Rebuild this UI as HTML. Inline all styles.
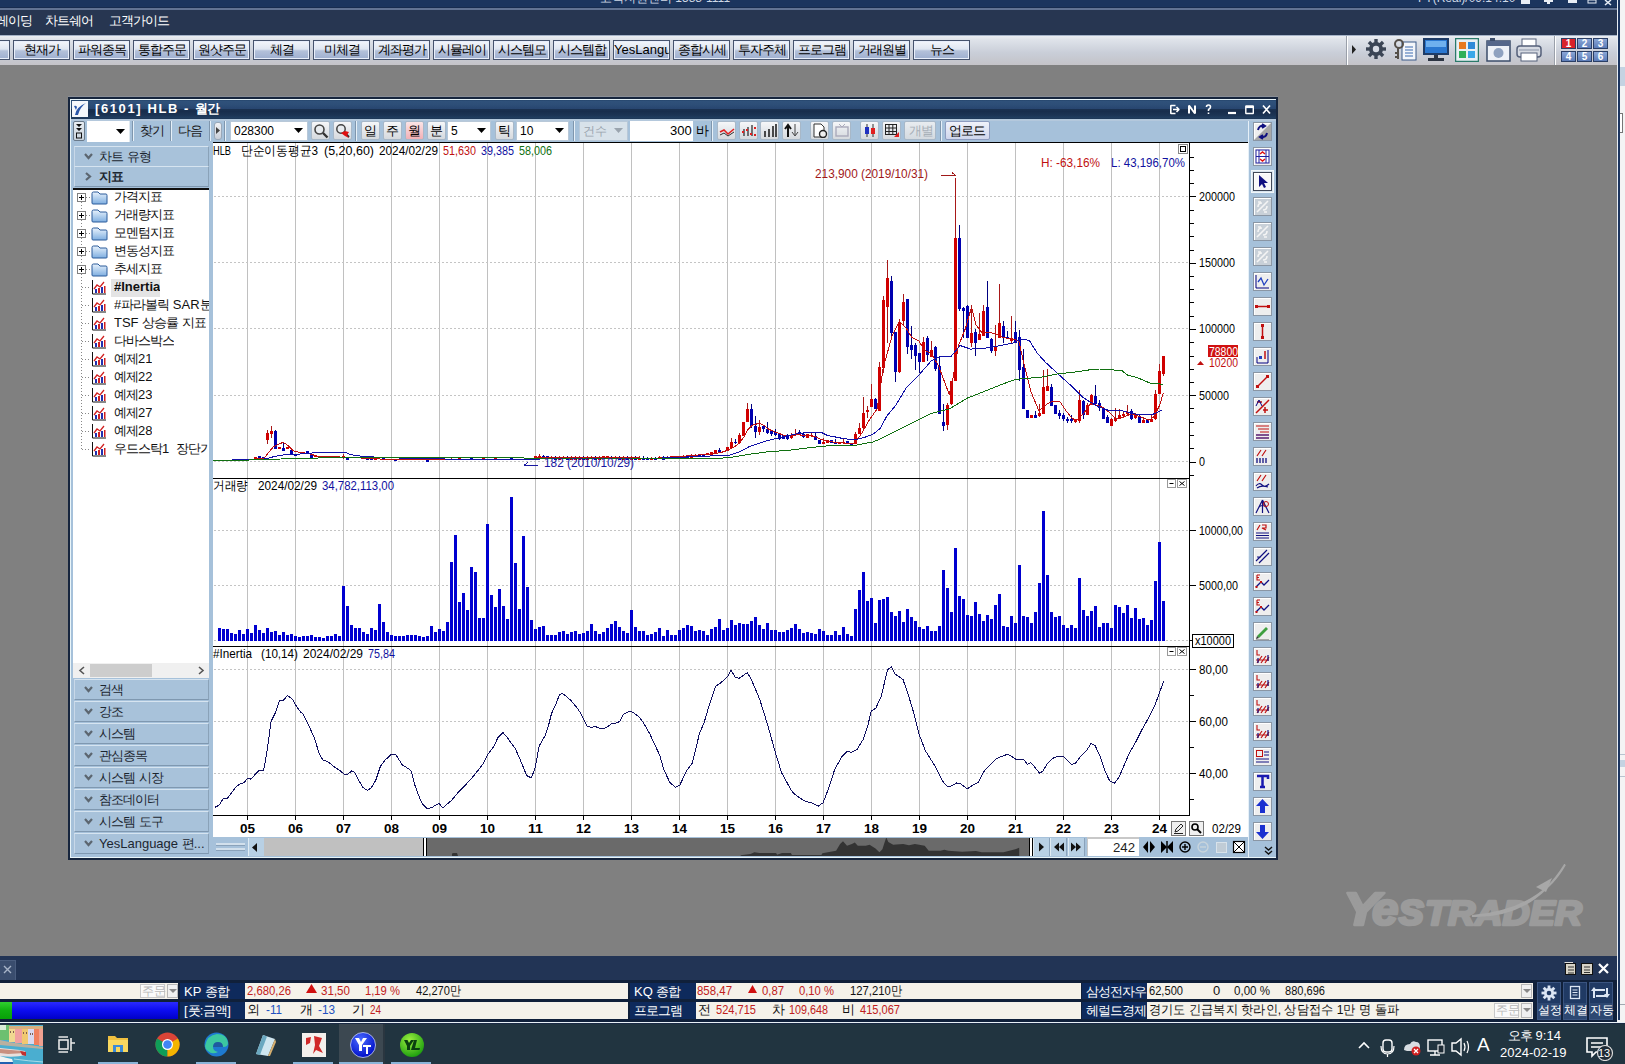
<!DOCTYPE html>
<html><head><meta charset="utf-8">
<style>
*{box-sizing:border-box}
html,body{margin:0;padding:0}
body{width:1625px;height:1064px;overflow:hidden;position:relative;background:#808080;font-family:"Liberation Sans", sans-serif;font-size:12px;color:#000}
.a{position:absolute}
.k{display:inline-block;width:12px;font-weight:inherit;text-align:center;overflow:visible}
.t{position:absolute;white-space:nowrap;line-height:1}
.tbtn{position:absolute;top:40px;height:20px;width:57px;border:1px solid #46536d;background:linear-gradient(#f3f6fb,#dfe6f1 45%,#b4c1da 55%,#9eafcf);box-shadow:inset 0 0 0 1px #e8eefa;text-align:center;font-size:13px;line-height:18px;color:#000;white-space:nowrap;overflow:hidden}
.wbtn{position:absolute;border:1px solid #7d93aa;background:linear-gradient(#eef3f8,#c9d7e6);text-align:center;white-space:nowrap;overflow:hidden}
.lhdr{position:absolute;left:74px;width:135px;height:21px;background:#a9c3dc;border:1px solid #8aa4bf;box-shadow:inset 1px 1px 0 #d8e6f2;font-size:12px;line-height:19px;color:#1a2530;white-space:nowrap}
.ibtn{position:absolute;width:19px;height:19px;border:1px solid #7a8a9c;background:#f0f0f0;box-shadow:inset 1px 1px 0 #fff}
</style></head><body>

<div class="a" style="left:0;top:0;width:1625px;height:8px;background:#1b355e"></div>
<div class="t" style="left:600px;top:-8px;color:#cfd8e6;font-size:12px"><b class="k">고</b><b class="k">객</b><b class="k">지</b><b class="k">원</b><b class="k">센</b><b class="k">터</b> 1588-1111</div>
<div class="t" style="left:1418px;top:-8px;color:#cfd8e6;font-size:12px">FT(Real)/09:14:10</div>
<svg class="a" style="left:1515px;top:0" width="100" height="6" fill="#e8eef6"><rect x="6" y="0" width="9" height="4"/><rect x="29" y="0" width="9" height="2"/><rect x="32" y="2" width="3" height="2"/><rect x="53" y="0" width="9" height="3"/><rect x="73" y="0" width="8" height="3" fill="none" stroke="#e8eef6"/><path d="M90 0L96 5M96 0L90 5" stroke="#e8eef6" stroke-width="1.5"/></svg>
<div class="a" style="left:0;top:7px;width:1625px;height:1px;background:#172c4f"></div>
<div class="a" style="left:0;top:8px;width:1625px;height:2px;background:#617393"></div>
<div class="a" style="left:0;top:10px;width:1625px;height:25px;background:#273651"></div>
<div class="t" style="left:-4px;top:14px;color:#fff;font-size:13px"><b class="k">레</b><b class="k">이</b><b class="k">딩</b></div>
<div class="t" style="left:45px;top:14px;color:#fff;font-size:13px"><b class="k">차</b><b class="k">트</b><b class="k">쉐</b><b class="k">어</b></div>
<div class="t" style="left:109px;top:14px;color:#fff;font-size:13px"><b class="k">고</b><b class="k">객</b><b class="k">가</b><b class="k">이</b><b class="k">드</b></div>
<div class="a" style="left:0;top:35px;width:1617px;height:30px;background:linear-gradient(#eef1f5 0,#dfe3ea 15%,#c9ced8 60%,#c4c3c8 100%)"></div>
<div class="a" style="left:0;top:35px;width:1617px;height:1px;background:#a5b3c8"></div>
<div class="tbtn" style="left:-47px"><b class="k">행</b></div>
<div class="tbtn" style="left:13px"><b class="k">현</b><b class="k">재</b><b class="k">가</b></div>
<div class="tbtn" style="left:73px"><b class="k">파</b><b class="k">워</b><b class="k">종</b><b class="k">목</b></div>
<div class="tbtn" style="left:133px"><b class="k">통</b><b class="k">합</b><b class="k">주</b><b class="k">문</b></div>
<div class="tbtn" style="left:193px"><b class="k">원</b><b class="k">샷</b><b class="k">주</b><b class="k">문</b></div>
<div class="tbtn" style="left:253px"><b class="k">체</b><b class="k">결</b></div>
<div class="tbtn" style="left:313px"><b class="k">미</b><b class="k">체</b><b class="k">결</b></div>
<div class="tbtn" style="left:373px"><b class="k">계</b><b class="k">좌</b><b class="k">평</b><b class="k">가</b></div>
<div class="tbtn" style="left:433px"><b class="k">시</b><b class="k">뮬</b><b class="k">레</b><b class="k">이</b></div>
<div class="tbtn" style="left:493px"><b class="k">시</b><b class="k">스</b><b class="k">템</b><b class="k">모</b></div>
<div class="tbtn" style="left:553px"><b class="k">시</b><b class="k">스</b><b class="k">템</b><b class="k">합</b></div>
<div class="tbtn" style="left:613px">YesLangu</div>
<div class="tbtn" style="left:673px"><b class="k">종</b><b class="k">합</b><b class="k">시</b><b class="k">세</b></div>
<div class="tbtn" style="left:733px"><b class="k">투</b><b class="k">자</b><b class="k">주</b><b class="k">체</b></div>
<div class="tbtn" style="left:793px"><b class="k">프</b><b class="k">로</b><b class="k">그</b><b class="k">램</b></div>
<div class="tbtn" style="left:853px"><b class="k">거</b><b class="k">래</b><b class="k">원</b><b class="k">별</b></div>
<div class="tbtn" style="left:913px"><b class="k">뉴</b><b class="k">스</b></div>
<div class="a" style="left:1346px;top:36px;width:1px;height:29px;background:#9aa0aa"></div>
<div class="a" style="left:1347px;top:36px;width:1px;height:29px;background:#fff"></div>
<svg class="a" style="left:1351px;top:45px" width="6" height="9"><path d="M1 0L5 4.5L1 9Z" fill="#222"/></svg>
<svg class="a" style="left:1365px;top:38px" width="22" height="22" viewBox="0 0 22 22"><g fill="#3b4555"><circle cx="11" cy="11" r="7"/><rect x="9.3" y="1" width="3.4" height="5" transform="rotate(0 11 11)"/><rect x="9.3" y="1" width="3.4" height="5" transform="rotate(45 11 11)"/><rect x="9.3" y="1" width="3.4" height="5" transform="rotate(90 11 11)"/><rect x="9.3" y="1" width="3.4" height="5" transform="rotate(135 11 11)"/><rect x="9.3" y="1" width="3.4" height="5" transform="rotate(180 11 11)"/><rect x="9.3" y="1" width="3.4" height="5" transform="rotate(225 11 11)"/><rect x="9.3" y="1" width="3.4" height="5" transform="rotate(270 11 11)"/><rect x="9.3" y="1" width="3.4" height="5" transform="rotate(315 11 11)"/></g><circle cx="11" cy="11" r="3.2" fill="#d8dce4"/></svg>
<svg class="a" style="left:1392px;top:38px" width="26" height="23"><rect x="10" y="4" width="14" height="18" fill="#f4f6fa" stroke="#3a5a8a"/><g stroke="#3a6ab0"><line x1="13" y1="9" x2="21" y2="9"/><line x1="13" y1="12" x2="21" y2="12"/><line x1="13" y1="15" x2="21" y2="15"/><line x1="13" y1="18" x2="21" y2="18"/></g><circle cx="7" cy="6" r="4" fill="none" stroke="#55504a" stroke-width="2"/><path d="M6 10V21M6 15h-3M6 19h-3" stroke="#55504a" stroke-width="2"/></svg>
<svg class="a" style="left:1423px;top:38px" width="26" height="23"><rect x="1" y="1" width="24" height="15" fill="#2a77d0" stroke="#1e3b66" stroke-width="2"/><rect x="3" y="3" width="20" height="6" fill="#6fb0ee"/><rect x="11" y="17" width="4" height="3" fill="#2c3442"/><rect x="5" y="20" width="16" height="3" fill="#2c3442"/></svg>
<svg class="a" style="left:1455px;top:38px" width="24" height="24"><rect x="0.5" y="0.5" width="23" height="23" fill="#e8f0f4" stroke="#2a7a6a" stroke-width="1.5"/><rect x="4" y="4" width="7" height="7" fill="#e87a20"/><rect x="13" y="4" width="7" height="7" fill="#2e8ad8"/><rect x="4" y="13" width="7" height="7" fill="#2eb05a"/><rect x="13" y="13" width="7" height="7" fill="#3aa8e8"/></svg>
<svg class="a" style="left:1486px;top:38px" width="25" height="24"><rect x="1" y="3" width="23" height="20" fill="#eef2f8" stroke="#3b4c6a" stroke-width="1.5"/><rect x="1" y="3" width="23" height="5" fill="#55678a"/><circle cx="12.5" cy="15" r="5" fill="#8fa2c0"/><rect x="4" y="0" width="5" height="3" fill="#3b4c6a"/></svg>
<svg class="a" style="left:1516px;top:38px" width="26" height="24"><rect x="6" y="1" width="14" height="8" fill="#fff" stroke="#55607a"/><rect x="1" y="8" width="24" height="11" rx="3" fill="#d6dae2" stroke="#55607a" stroke-width="1.5"/><rect x="5" y="15" width="16" height="8" fill="#fff" stroke="#55607a"/><line x1="3" y1="12" x2="23" y2="12" stroke="#8a94a8"/></svg>
<div class="a" style="left:1554px;top:36px;width:1px;height:29px;background:#9aa0aa"></div>
<div class="a" style="left:1555px;top:36px;width:1px;height:29px;background:#fff"></div>
<div class="a" style="left:1561px;top:38px;width:15px;height:11px;background:#d8222a;border:1px solid #2b3f66;color:#fff;font-size:10px;font-weight:bold;line-height:9px;text-align:center">1</div>
<div class="a" style="left:1577px;top:38px;width:15px;height:11px;background:linear-gradient(#8aa6d6,#5c7cb8);border:1px solid #2b3f66;color:#fff;font-size:10px;font-weight:bold;line-height:9px;text-align:center">2</div>
<div class="a" style="left:1593px;top:38px;width:15px;height:11px;background:linear-gradient(#8aa6d6,#5c7cb8);border:1px solid #2b3f66;color:#fff;font-size:10px;font-weight:bold;line-height:9px;text-align:center">3</div>
<div class="a" style="left:1561px;top:51px;width:15px;height:11px;background:linear-gradient(#8aa6d6,#5c7cb8);border:1px solid #2b3f66;color:#fff;font-size:10px;font-weight:bold;line-height:9px;text-align:center">4</div>
<div class="a" style="left:1577px;top:51px;width:15px;height:11px;background:linear-gradient(#8aa6d6,#5c7cb8);border:1px solid #2b3f66;color:#fff;font-size:10px;font-weight:bold;line-height:9px;text-align:center">5</div>
<div class="a" style="left:1593px;top:51px;width:15px;height:11px;background:linear-gradient(#8aa6d6,#5c7cb8);border:1px solid #2b3f66;color:#fff;font-size:10px;font-weight:bold;line-height:9px;text-align:center">6</div>
<div class="a" style="left:1617px;top:0;width:8px;height:1064px;background:#f4f4f4"></div>
<div class="a" style="left:1617px;top:0;width:1px;height:1020px;background:#e8eef4"></div>
<div class="a" style="left:1618px;top:0;width:2px;height:1020px;background:#1c3560"></div>
<div class="a" style="left:1620px;top:67px;width:5px;height:19px;background:#c5d3e2"></div>
<div class="a" style="left:1620px;top:113px;width:3px;height:20px;border:1px solid #777;border-left:0;background:#fff"></div>
<div class="a" style="left:1620px;top:754px;width:5px;height:1px;background:#b8c4d0"></div>
<div class="a" style="left:1620px;top:760px;width:5px;height:7px;background:#c5d3e2"></div>
<div class="a" style="left:1620px;top:776px;width:5px;height:1px;background:#b8c4d0"></div>
<div class="a" style="left:1620px;top:1004px;width:5px;height:1px;background:#a0a8b0"></div>
<svg class="a" style="left:1335px;top:855px" width="260" height="80" viewBox="1335 855 260 80">
<g fill="#9b9b9b" stroke="#9b9b9b" stroke-width="2.6" stroke-linejoin="round" font-family="Liberation Sans" font-weight="bold" font-style="italic">
<text x="1343" y="925" font-size="47" textLength="37" lengthAdjust="spacingAndGlyphs">Y</text>
<text x="1372" y="925" font-size="46" textLength="53" lengthAdjust="spacingAndGlyphs">es</text>
<text x="1425" y="925" font-size="34.5" textLength="157" lengthAdjust="spacingAndGlyphs">TRADER</text>
</g>
<path d="M1472 916 Q1532 918 1565 864.5 Q1540 910 1472 916Z" fill="#a6a6a6" stroke="#a6a6a6" stroke-width="2"/>
<path d="M1536 887 L1552 878 L1546 892Z" fill="#a8a8a8"/>
</svg>
<div class="a" style="left:68px;top:96px;width:1210px;height:1px;background:#8a8e96"></div>
<div class="a" style="left:68px;top:97px;width:1210px;height:763px;background:#16253d"></div>
<div class="a" style="left:70px;top:99px;width:1206px;height:759px;background:#e8f4f8"></div>
<div class="a" style="left:71px;top:100px;width:1205px;height:757px;background:#a6c1da"></div>
<div class="a" style="left:71px;top:100px;width:1205px;height:19px;background:linear-gradient(#24446a 0,#2f517a 6%,#2d4e77 25%,#284670 45%,#1a3150 50%,#182d4c 60%,#1c3454 80%,#213e60 95%,#1d3350 100%)"></div>
<div class="a" style="left:71px;top:119px;width:1205px;height:2px;background:#b4c8dc"></div>
<svg class="a" style="left:72px;top:101px" width="16" height="16"><rect width="16" height="16" fill="#f6f8fb"/><path d="M3 14 Q4 6 14 2 Q8 6 6 14Z" fill="#2a56a8"/><path d="M2 5 Q4 4 5 6 L4 9Z" fill="#2a56a8"/></svg>
<div class="t" style="left:95px;top:102px;color:#fff;font-size:13px;font-weight:bold;letter-spacing:1.6px">[6101] HLB - <b class="k">월</b><b class="k">간</b></div>
<svg class="a" style="left:1168px;top:102px" width="105" height="14" fill="none" stroke="#fff" stroke-width="1.6" stroke-linejoin="bevel">
<path d="M7.5 3.5H2.8V11.5H7.5M5 7.5H10.5M8.5 5L11 7.5L8.5 10"/>
<path d="M21 11.5V3.5L27 11.5V3.5" stroke-width="2"/>
<path d="M38.5 5Q38.5 3 40.5 3Q42.5 3 42.5 5Q42.5 6.5 40.5 7.5V9M40.5 10.5V12" stroke-width="1.6"/>
<path d="M60 11H68" stroke-width="2.2"/>
<rect x="77.8" y="4" width="7.5" height="7.5" stroke-width="1.4"/><path d="M77.8 5H85.3" stroke-width="2"/>
<path d="M95 3.5L102 11.5M102 3.5L95 11.5" stroke-width="1.7"/>
</svg>
<div class="a" style="left:73px;top:121px;width:12px;height:20px;border:1px solid #6a7a8a;border-radius:2px;background:linear-gradient(#e8edf2,#c8d2dc);"></div>
<svg class="a" style="left:75px;top:123px" width="8" height="16"><path d="M1 1H7L4 4Z M1 5H7L4 8Z" fill="#111"/><rect x="1.5" y="10" width="5" height="5" fill="none" stroke="#111"/></svg>
<div class="a" style="left:87px;top:121px;width:43px;height:21px;background:#fff;border-right:1px solid #dfe8ef"></div>
<svg class="a" style="left:116px;top:129px" width="9" height="6"><path d="M0 0H9L4.5 5Z" fill="#000"/></svg>
<div class="a" style="left:132px;top:121px;width:1px;height:20px;background:#7f96ad"></div><div class="a" style="left:133px;top:121px;width:1px;height:20px;background:#e6f0f8"></div>
<div class="t" style="left:140px;top:124px;font-size:13px;color:#1a1a1a"><b class="k">찾</b><b class="k">기</b></div>
<div class="a" style="left:170px;top:121px;width:1px;height:20px;background:#7f96ad"></div><div class="a" style="left:171px;top:121px;width:1px;height:20px;background:#e6f0f8"></div>
<div class="t" style="left:178px;top:124px;font-size:13px;color:#1a1a1a"><b class="k">다</b><b class="k">음</b></div>
<div class="a" style="left:209px;top:121px;width:1px;height:20px;background:#7f96ad"></div><div class="a" style="left:210px;top:121px;width:1px;height:20px;background:#e6f0f8"></div>
<div class="a" style="left:214px;top:122px;width:8px;height:18px;border:1px solid #9aa8b8;border-radius:2px;background:linear-gradient(#f0f2f5,#c8ced8);border-radius:3px"></div>
<svg class="a" style="left:216px;top:127px" width="4" height="7"><path d="M0 0L4 3.5L0 7Z" fill="#444"/></svg>
<div class="a" style="left:224px;top:121px;width:1px;height:20px;background:#7f96ad"></div><div class="a" style="left:225px;top:121px;width:1px;height:20px;background:#e6f0f8"></div>
<div class="a" style="left:230px;top:121px;width:78px;height:20px;background:#fff;border:1px solid #b8c8d8"></div>
<div class="t" style="left:234px;top:125px;font-size:12px;color:#000">028300</div>
<svg class="a" style="left:294px;top:128px" width="9" height="6"><path d="M0 0H9L4.5 5Z" fill="#000"/></svg>
<div class="a" style="left:311px;top:121px;width:19px;height:19px;border:1px solid #a8b8c8;border-radius:2px;background:linear-gradient(#f6f7f9,#e4e7eb 50%,#d6dade);"></div>
<svg class="a" style="left:313px;top:123px" width="16" height="16"><circle cx="6.5" cy="6.5" r="4.5" fill="#e8ecf0" stroke="#444" stroke-width="1.6"/><path d="M10 10L14.5 14.5" stroke="#333" stroke-width="2.4"/></svg>
<div class="a" style="left:333px;top:121px;width:19px;height:19px;border:1px solid #a8b8c8;border-radius:2px;background:linear-gradient(#f6f7f9,#e4e7eb 50%,#d6dade);"></div>
<svg class="a" style="left:335px;top:123px" width="16" height="16"><circle cx="6" cy="6" r="4.2" fill="#e8ecf0" stroke="#444" stroke-width="1.5"/><path d="M9 9L14 14" stroke="#333" stroke-width="2"/><path d="M6 10L10 8L14 9L12 12L14 15L10 13Z" fill="#e01010"/></svg>
<div class="a" style="left:355px;top:121px;width:1px;height:20px;background:#7f96ad"></div><div class="a" style="left:356px;top:121px;width:1px;height:20px;background:#e6f0f8"></div>
<div class="a" style="left:361px;top:121px;width:19px;height:19px;border:1px solid #a8b8c8;border-radius:2px;background:linear-gradient(#f6f7f9,#e4e7eb 50%,#d6dade);"></div>
<div class="t" style="left:364px;top:124px;font-size:13px"><b class="k">일</b></div>
<div class="a" style="left:383px;top:121px;width:19px;height:19px;border:1px solid #a8b8c8;border-radius:2px;background:linear-gradient(#f6f7f9,#e4e7eb 50%,#d6dade);"></div>
<div class="t" style="left:386px;top:124px;font-size:13px"><b class="k">주</b></div>
<div class="a" style="left:405px;top:121px;width:19px;height:19px;border:1px solid #a8b8c8;border-radius:2px;background:linear-gradient(#fbe4e6,#f2b0b6);"></div>
<div class="t" style="left:408px;top:124px;font-size:13px"><b class="k">월</b></div>
<div class="a" style="left:427px;top:121px;width:19px;height:19px;border:1px solid #a8b8c8;border-radius:2px;background:linear-gradient(#f6f7f9,#e4e7eb 50%,#d6dade);"></div>
<div class="t" style="left:430px;top:124px;font-size:13px"><b class="k">분</b></div>
<div class="a" style="left:447px;top:121px;width:44px;height:20px;background:#fff;border:1px solid #b8c8d8"></div>
<div class="t" style="left:451px;top:125px;font-size:12px;color:#000">5</div>
<svg class="a" style="left:477px;top:128px" width="9" height="6"><path d="M0 0H9L4.5 5Z" fill="#000"/></svg>
<div class="a" style="left:495px;top:121px;width:19px;height:19px;border:1px solid #a8b8c8;border-radius:2px;background:linear-gradient(#f6f7f9,#e4e7eb 50%,#d6dade);"></div>
<div class="t" style="left:498px;top:124px;font-size:13px"><b class="k">틱</b></div>
<div class="a" style="left:516px;top:121px;width:53px;height:20px;background:#fff;border:1px solid #b8c8d8"></div>
<div class="t" style="left:520px;top:125px;font-size:12px;color:#000">10</div>
<svg class="a" style="left:555px;top:128px" width="9" height="6"><path d="M0 0H9L4.5 5Z" fill="#000"/></svg>
<div class="a" style="left:573px;top:121px;width:1px;height:20px;background:#7f96ad"></div><div class="a" style="left:574px;top:121px;width:1px;height:20px;background:#e6f0f8"></div>
<div class="a" style="left:579px;top:121px;width:49px;height:20px;background:#d8e2ea;border:1px solid #b8c8d8"></div>
<div class="t" style="left:583px;top:125px;font-size:12px;color:#9aa4ae"><b class="k">건</b><b class="k">수</b></div>
<svg class="a" style="left:614px;top:128px" width="9" height="6"><path d="M0 0H9L4.5 5Z" fill="#9aa4ae"/></svg>
<div class="a" style="left:630px;top:121px;width:63px;height:20px;background:#fff"></div>
<div class="t" style="left:670px;top:124px;font-size:13px">300</div>
<div class="t" style="left:696px;top:124px;font-size:13px"><b class="k">바</b></div>
<div class="a" style="left:711px;top:121px;width:1px;height:20px;background:#7f96ad"></div><div class="a" style="left:712px;top:121px;width:1px;height:20px;background:#e6f0f8"></div>
<div class="a" style="left:717px;top:121px;width:19px;height:19px;border:1px solid #a8b8c8;border-radius:2px;background:linear-gradient(#f6f7f9,#e4e7eb 50%,#d6dade);"></div>
<div class="a" style="left:739px;top:121px;width:19px;height:19px;border:1px solid #a8b8c8;border-radius:2px;background:linear-gradient(#f6f7f9,#e4e7eb 50%,#d6dade);"></div>
<div class="a" style="left:760px;top:121px;width:19px;height:19px;border:1px solid #a8b8c8;border-radius:2px;background:linear-gradient(#f6f7f9,#e4e7eb 50%,#d6dade);"></div>
<div class="a" style="left:782px;top:121px;width:19px;height:19px;border:1px solid #a8b8c8;border-radius:2px;background:linear-gradient(#f6f7f9,#e4e7eb 50%,#d6dade);"></div>
<div class="a" style="left:810px;top:121px;width:19px;height:19px;border:1px solid #a8b8c8;border-radius:2px;background:linear-gradient(#f6f7f9,#e4e7eb 50%,#d6dade);"></div>
<div class="a" style="left:832px;top:121px;width:19px;height:19px;border:1px solid #a8b8c8;border-radius:2px;background:linear-gradient(#f6f7f9,#e4e7eb 50%,#d6dade);"></div>
<div class="a" style="left:860px;top:121px;width:19px;height:19px;border:1px solid #a8b8c8;border-radius:2px;background:linear-gradient(#f6f7f9,#e4e7eb 50%,#d6dade);"></div>
<div class="a" style="left:882px;top:121px;width:19px;height:19px;border:1px solid #a8b8c8;border-radius:2px;background:linear-gradient(#f6f7f9,#e4e7eb 50%,#d6dade);"></div>
<svg class="a" style="left:719px;top:124px" width="16" height="14"><path d="M1 8L5 6L9 10L15 5" stroke="#e02020" stroke-width="1.6" fill="none"/><path d="M1 11L5 9L9 12L15 8" stroke="#303030" stroke-width="1" fill="none"/></svg>
<svg class="a" style="left:741px;top:123px" width="16" height="15"><g stroke="#222" stroke-width="1.2"><path d="M3 6V13M7 4V13M11 2V13"/></g><g fill="#e02020"><rect x="1" y="8" width="2" height="2"/><rect x="5" y="6" width="2" height="2"/><rect x="9" y="10" width="2" height="2"/><rect x="13" y="4" width="2" height="2"/><rect x="13" y="11" width="2" height="2"/></g></svg>
<svg class="a" style="left:762px;top:123px" width="16" height="15"><g stroke="#222" stroke-width="1.6"><path d="M3 8V14M7 6V14M11 3V14M14 1V14"/></g></svg>
<svg class="a" style="left:784px;top:123px" width="16" height="15"><path d="M4 14V3M1 6L4 2L7 6" stroke="#111" stroke-width="2" fill="none"/><path d="M11 1V12M8 9L11 13L14 9" stroke="#444" stroke-width="1" fill="none"/></svg>
<svg class="a" style="left:812px;top:123px" width="16" height="15"><path d="M2 1H9L12 4V14H2Z" fill="#fff" stroke="#333"/><circle cx="11" cy="11" r="3.5" fill="#eee" stroke="#222" stroke-width="1.4"/></svg>
<svg class="a" style="left:834px;top:123px" width="16" height="15"><rect x="2" y="4" width="12" height="9" fill="none" stroke="#aab" stroke-width="1.4"/><path d="M5 1L8 4L11 1" stroke="#aab" fill="none"/></svg>
<svg class="a" style="left:862px;top:123px" width="16" height="15"><path d="M5 1V14M11 1V14" stroke="#333"/><rect x="3" y="4" width="4" height="7" fill="#2030c0"/><rect x="9" y="5" width="4" height="6" fill="#e02020"/></svg>
<svg class="a" style="left:884px;top:123px" width="16" height="15"><g stroke="#222" fill="none"><rect x="1.5" y="1.5" width="11" height="10"/><path d="M1.5 5H12.5M1.5 8.5H12.5M5 1.5V11.5M8.8 1.5V11.5"/></g><path d="M10 14L15 9V14Z" fill="#e02020"/></svg>
<div class="a" style="left:904px;top:121px;width:32px;height:19px;border:1px solid #a8b8c8;border-radius:2px;background:linear-gradient(#e8ecf0,#d4dae0);"></div>
<div class="t" style="left:909px;top:124px;font-size:13px;color:#a8b0b8"><b class="k">개</b><b class="k">별</b></div>
<div class="a" style="left:940px;top:121px;width:1px;height:20px;background:#7f96ad"></div><div class="a" style="left:941px;top:121px;width:1px;height:20px;background:#e6f0f8"></div>
<div class="a" style="left:945px;top:121px;width:45px;height:19px;border:1px solid #8d9cc0;border-radius:2px;background:linear-gradient(#f0f2fa,#cfd6ec);"></div>
<div class="t" style="left:949px;top:124px;font-size:13px"><b class="k">업</b><b class="k">로</b><b class="k">드</b></div>
<div class="a" style="left:71px;top:142px;width:142px;height:715px;background:#a6c1da"></div>
<div class="a" style="left:74px;top:146px;width:135px;height:21px;background:#a8c2da;border-top:1px solid #d6e4f0;border-left:1px solid #c8d8e8;border-bottom:1px solid #7f98b0;border-right:1px solid #8aa2b8"></div>
<svg class="a" style="left:84px;top:153px" width="9" height="8"><path d="M1 1L4.5 5L8 1" stroke="#5c6670" stroke-width="2.2" fill="none"/></svg>
<div class="t" style="left:99px;top:150px;font-size:13px;font-weight:normal;color:#1c2630"><b class="k">차</b><b class="k">트</b> <b class="k">유</b><b class="k">형</b></div>
<div class="a" style="left:74px;top:166px;width:135px;height:21px;background:#a8c2da;border-top:1px solid #d6e4f0;border-left:1px solid #c8d8e8;border-bottom:1px solid #7f98b0;border-right:1px solid #8aa2b8"></div>
<svg class="a" style="left:85px;top:172px" width="8" height="9"><path d="M1 1L5 4.5L1 8" stroke="#5c6670" stroke-width="2.2" fill="none"/></svg>
<div class="t" style="left:99px;top:170px;font-size:13px;font-weight:bold;color:#1c2630"><b class="k">지</b><b class="k">표</b></div>
<div class="a" style="left:73px;top:188px;width:136px;height:2px;background:#101010"></div>
<div class="a" style="left:73px;top:190px;width:136px;height:473px;background:#fff"></div>
<svg class="a" style="left:73px;top:190px" width="136" height="270"><path d="M8.5 12V259" stroke="#888" stroke-dasharray="1,2"/><path d="M13 7.5H18" stroke="#888" stroke-dasharray="1,2"/><path d="M13 25.5H18" stroke="#888" stroke-dasharray="1,2"/><path d="M13 43.5H18" stroke="#888" stroke-dasharray="1,2"/><path d="M13 61.5H18" stroke="#888" stroke-dasharray="1,2"/><path d="M13 79.5H18" stroke="#888" stroke-dasharray="1,2"/><path d="M9 97.5H18" stroke="#888" stroke-dasharray="1,2"/><path d="M9 115.5H18" stroke="#888" stroke-dasharray="1,2"/><path d="M9 133.5H18" stroke="#888" stroke-dasharray="1,2"/><path d="M9 151.5H18" stroke="#888" stroke-dasharray="1,2"/><path d="M9 169.5H18" stroke="#888" stroke-dasharray="1,2"/><path d="M9 187.5H18" stroke="#888" stroke-dasharray="1,2"/><path d="M9 205.5H18" stroke="#888" stroke-dasharray="1,2"/><path d="M9 223.5H18" stroke="#888" stroke-dasharray="1,2"/><path d="M9 241.5H18" stroke="#888" stroke-dasharray="1,2"/><path d="M9 259.5H18" stroke="#888" stroke-dasharray="1,2"/></svg>
<div class="a" style="left:77px;top:193px;width:9px;height:9px;border:1px solid #808080;background:#fff"></div>
<svg class="a" style="left:78px;top:194px" width="7" height="7"><path d="M1 3.5H6M3.5 1V6" stroke="#000"/></svg>
<svg class="a" style="left:91px;top:191px" width="17" height="14"><path d="M1 2.5Q1 1 2.5 1H7L9 3H15Q16 3 16 4.5V12.5Q16 13 15 13H2Q1 13 1 12Z" fill="url(#fg)" stroke="#2a5a9a"/></svg>
<div class="t" style="left:114px;top:190px;font-size:13px;color:#111"><b class="k">가</b><b class="k">격</b><b class="k">지</b><b class="k">표</b></div>
<div class="a" style="left:77px;top:211px;width:9px;height:9px;border:1px solid #808080;background:#fff"></div>
<svg class="a" style="left:78px;top:212px" width="7" height="7"><path d="M1 3.5H6M3.5 1V6" stroke="#000"/></svg>
<svg class="a" style="left:91px;top:209px" width="17" height="14"><path d="M1 2.5Q1 1 2.5 1H7L9 3H15Q16 3 16 4.5V12.5Q16 13 15 13H2Q1 13 1 12Z" fill="url(#fg)" stroke="#2a5a9a"/></svg>
<div class="t" style="left:114px;top:208px;font-size:13px;color:#111"><b class="k">거</b><b class="k">래</b><b class="k">량</b><b class="k">지</b><b class="k">표</b></div>
<div class="a" style="left:77px;top:229px;width:9px;height:9px;border:1px solid #808080;background:#fff"></div>
<svg class="a" style="left:78px;top:230px" width="7" height="7"><path d="M1 3.5H6M3.5 1V6" stroke="#000"/></svg>
<svg class="a" style="left:91px;top:227px" width="17" height="14"><path d="M1 2.5Q1 1 2.5 1H7L9 3H15Q16 3 16 4.5V12.5Q16 13 15 13H2Q1 13 1 12Z" fill="url(#fg)" stroke="#2a5a9a"/></svg>
<div class="t" style="left:114px;top:226px;font-size:13px;color:#111"><b class="k">모</b><b class="k">멘</b><b class="k">텀</b><b class="k">지</b><b class="k">표</b></div>
<div class="a" style="left:77px;top:247px;width:9px;height:9px;border:1px solid #808080;background:#fff"></div>
<svg class="a" style="left:78px;top:248px" width="7" height="7"><path d="M1 3.5H6M3.5 1V6" stroke="#000"/></svg>
<svg class="a" style="left:91px;top:245px" width="17" height="14"><path d="M1 2.5Q1 1 2.5 1H7L9 3H15Q16 3 16 4.5V12.5Q16 13 15 13H2Q1 13 1 12Z" fill="url(#fg)" stroke="#2a5a9a"/></svg>
<div class="t" style="left:114px;top:244px;font-size:13px;color:#111"><b class="k">변</b><b class="k">동</b><b class="k">성</b><b class="k">지</b><b class="k">표</b></div>
<div class="a" style="left:77px;top:265px;width:9px;height:9px;border:1px solid #808080;background:#fff"></div>
<svg class="a" style="left:78px;top:266px" width="7" height="7"><path d="M1 3.5H6M3.5 1V6" stroke="#000"/></svg>
<svg class="a" style="left:91px;top:263px" width="17" height="14"><path d="M1 2.5Q1 1 2.5 1H7L9 3H15Q16 3 16 4.5V12.5Q16 13 15 13H2Q1 13 1 12Z" fill="url(#fg)" stroke="#2a5a9a"/></svg>
<div class="t" style="left:114px;top:262px;font-size:13px;color:#111"><b class="k">추</b><b class="k">세</b><b class="k">지</b><b class="k">표</b></div>
<svg width="0" height="0" style="position:absolute"><defs><linearGradient id="fg" x1="0" y1="0" x2="0" y2="1"><stop offset="0" stop-color="#e8f2fc"/><stop offset="1" stop-color="#7eaee0"/></linearGradient></defs></svg>
<div class="a" style="left:111px;top:279px;width:49px;height:18px;background:#e4e4e4"></div>
<svg class="a" style="left:91px;top:280px" width="16" height="15"><path d="M1.5 0V14H15" stroke="#111" fill="none"/><path d="M3 9L6 5L9 7L13 2" stroke="#d02020" stroke-width="1.3" fill="none"/><rect x="4" y="9" width="2" height="4" fill="#2030b0"/><rect x="7" y="8" width="2" height="5" fill="#d02020"/><rect x="10" y="7" width="2" height="6" fill="#2030b0"/><rect x="13" y="6" width="1.5" height="7" fill="#d02020"/></svg>
<div class="t" style="left:114px;top:280px;font-size:13px;font-weight:bold;color:#111;max-width:95px;overflow:hidden">#Inertia</div>
<svg class="a" style="left:91px;top:298px" width="16" height="15"><path d="M1.5 0V14H15" stroke="#111" fill="none"/><path d="M3 9L6 5L9 7L13 2" stroke="#d02020" stroke-width="1.3" fill="none"/><rect x="4" y="9" width="2" height="4" fill="#2030b0"/><rect x="7" y="8" width="2" height="5" fill="#d02020"/><rect x="10" y="7" width="2" height="6" fill="#2030b0"/><rect x="13" y="6" width="1.5" height="7" fill="#d02020"/></svg>
<div class="t" style="left:114px;top:298px;font-size:13px;font-weight:normal;color:#111;max-width:95px;overflow:hidden">#<b class="k">파</b><b class="k">라</b><b class="k">볼</b><b class="k">릭</b> SAR<b class="k">분</b></div>
<svg class="a" style="left:91px;top:316px" width="16" height="15"><path d="M1.5 0V14H15" stroke="#111" fill="none"/><path d="M3 9L6 5L9 7L13 2" stroke="#d02020" stroke-width="1.3" fill="none"/><rect x="4" y="9" width="2" height="4" fill="#2030b0"/><rect x="7" y="8" width="2" height="5" fill="#d02020"/><rect x="10" y="7" width="2" height="6" fill="#2030b0"/><rect x="13" y="6" width="1.5" height="7" fill="#d02020"/></svg>
<div class="t" style="left:114px;top:316px;font-size:13px;font-weight:normal;color:#111;max-width:95px;overflow:hidden">TSF <b class="k">상</b><b class="k">승</b><b class="k">률</b> <b class="k">지</b><b class="k">표</b></div>
<svg class="a" style="left:91px;top:334px" width="16" height="15"><path d="M1.5 0V14H15" stroke="#111" fill="none"/><path d="M3 9L6 5L9 7L13 2" stroke="#d02020" stroke-width="1.3" fill="none"/><rect x="4" y="9" width="2" height="4" fill="#2030b0"/><rect x="7" y="8" width="2" height="5" fill="#d02020"/><rect x="10" y="7" width="2" height="6" fill="#2030b0"/><rect x="13" y="6" width="1.5" height="7" fill="#d02020"/></svg>
<div class="t" style="left:114px;top:334px;font-size:13px;font-weight:normal;color:#111;max-width:95px;overflow:hidden"><b class="k">다</b><b class="k">바</b><b class="k">스</b><b class="k">박</b><b class="k">스</b></div>
<svg class="a" style="left:91px;top:352px" width="16" height="15"><path d="M1.5 0V14H15" stroke="#111" fill="none"/><path d="M3 9L6 5L9 7L13 2" stroke="#d02020" stroke-width="1.3" fill="none"/><rect x="4" y="9" width="2" height="4" fill="#2030b0"/><rect x="7" y="8" width="2" height="5" fill="#d02020"/><rect x="10" y="7" width="2" height="6" fill="#2030b0"/><rect x="13" y="6" width="1.5" height="7" fill="#d02020"/></svg>
<div class="t" style="left:114px;top:352px;font-size:13px;font-weight:normal;color:#111;max-width:95px;overflow:hidden"><b class="k">예</b><b class="k">제</b>21</div>
<svg class="a" style="left:91px;top:370px" width="16" height="15"><path d="M1.5 0V14H15" stroke="#111" fill="none"/><path d="M3 9L6 5L9 7L13 2" stroke="#d02020" stroke-width="1.3" fill="none"/><rect x="4" y="9" width="2" height="4" fill="#2030b0"/><rect x="7" y="8" width="2" height="5" fill="#d02020"/><rect x="10" y="7" width="2" height="6" fill="#2030b0"/><rect x="13" y="6" width="1.5" height="7" fill="#d02020"/></svg>
<div class="t" style="left:114px;top:370px;font-size:13px;font-weight:normal;color:#111;max-width:95px;overflow:hidden"><b class="k">예</b><b class="k">제</b>22</div>
<svg class="a" style="left:91px;top:388px" width="16" height="15"><path d="M1.5 0V14H15" stroke="#111" fill="none"/><path d="M3 9L6 5L9 7L13 2" stroke="#d02020" stroke-width="1.3" fill="none"/><rect x="4" y="9" width="2" height="4" fill="#2030b0"/><rect x="7" y="8" width="2" height="5" fill="#d02020"/><rect x="10" y="7" width="2" height="6" fill="#2030b0"/><rect x="13" y="6" width="1.5" height="7" fill="#d02020"/></svg>
<div class="t" style="left:114px;top:388px;font-size:13px;font-weight:normal;color:#111;max-width:95px;overflow:hidden"><b class="k">예</b><b class="k">제</b>23</div>
<svg class="a" style="left:91px;top:406px" width="16" height="15"><path d="M1.5 0V14H15" stroke="#111" fill="none"/><path d="M3 9L6 5L9 7L13 2" stroke="#d02020" stroke-width="1.3" fill="none"/><rect x="4" y="9" width="2" height="4" fill="#2030b0"/><rect x="7" y="8" width="2" height="5" fill="#d02020"/><rect x="10" y="7" width="2" height="6" fill="#2030b0"/><rect x="13" y="6" width="1.5" height="7" fill="#d02020"/></svg>
<div class="t" style="left:114px;top:406px;font-size:13px;font-weight:normal;color:#111;max-width:95px;overflow:hidden"><b class="k">예</b><b class="k">제</b>27</div>
<svg class="a" style="left:91px;top:424px" width="16" height="15"><path d="M1.5 0V14H15" stroke="#111" fill="none"/><path d="M3 9L6 5L9 7L13 2" stroke="#d02020" stroke-width="1.3" fill="none"/><rect x="4" y="9" width="2" height="4" fill="#2030b0"/><rect x="7" y="8" width="2" height="5" fill="#d02020"/><rect x="10" y="7" width="2" height="6" fill="#2030b0"/><rect x="13" y="6" width="1.5" height="7" fill="#d02020"/></svg>
<div class="t" style="left:114px;top:424px;font-size:13px;font-weight:normal;color:#111;max-width:95px;overflow:hidden"><b class="k">예</b><b class="k">제</b>28</div>
<svg class="a" style="left:91px;top:442px" width="16" height="15"><path d="M1.5 0V14H15" stroke="#111" fill="none"/><path d="M3 9L6 5L9 7L13 2" stroke="#d02020" stroke-width="1.3" fill="none"/><rect x="4" y="9" width="2" height="4" fill="#2030b0"/><rect x="7" y="8" width="2" height="5" fill="#d02020"/><rect x="10" y="7" width="2" height="6" fill="#2030b0"/><rect x="13" y="6" width="1.5" height="7" fill="#d02020"/></svg>
<div class="t" style="left:114px;top:442px;font-size:13px;font-weight:normal;color:#111;max-width:95px;overflow:hidden"><b class="k">우</b><b class="k">드</b><b class="k">스</b><b class="k">탁</b>1_<b class="k">장</b><b class="k">단</b><b class="k">기</b></div>
<div class="a" style="left:73px;top:663px;width:136px;height:15px;background:#f0f0f0"></div>
<div class="a" style="left:90px;top:664px;width:62px;height:13px;background:#cdcdcd"></div>
<svg class="a" style="left:78px;top:666px" width="8" height="9"><path d="M6 1L2 4.5L6 8" stroke="#555" stroke-width="1.6" fill="none"/></svg>
<svg class="a" style="left:197px;top:666px" width="8" height="9"><path d="M2 1L6 4.5L2 8" stroke="#555" stroke-width="1.6" fill="none"/></svg>
<div class="a" style="left:74px;top:679px;width:135px;height:21px;background:#a8c2da;border-top:1px solid #d6e4f0;border-left:1px solid #c8d8e8;border-bottom:1px solid #7f98b0;border-right:1px solid #8aa2b8"></div>
<svg class="a" style="left:84px;top:686px" width="9" height="8"><path d="M1 1L4.5 5L8 1" stroke="#5c6670" stroke-width="2.2" fill="none"/></svg>
<div class="t" style="left:99px;top:683px;font-size:13px;font-weight:normal;color:#1c2630"><b class="k">검</b><b class="k">색</b></div>
<div class="a" style="left:74px;top:701px;width:135px;height:21px;background:#a8c2da;border-top:1px solid #d6e4f0;border-left:1px solid #c8d8e8;border-bottom:1px solid #7f98b0;border-right:1px solid #8aa2b8"></div>
<svg class="a" style="left:84px;top:708px" width="9" height="8"><path d="M1 1L4.5 5L8 1" stroke="#5c6670" stroke-width="2.2" fill="none"/></svg>
<div class="t" style="left:99px;top:705px;font-size:13px;font-weight:normal;color:#1c2630"><b class="k">강</b><b class="k">조</b></div>
<div class="a" style="left:74px;top:723px;width:135px;height:21px;background:#a8c2da;border-top:1px solid #d6e4f0;border-left:1px solid #c8d8e8;border-bottom:1px solid #7f98b0;border-right:1px solid #8aa2b8"></div>
<svg class="a" style="left:84px;top:730px" width="9" height="8"><path d="M1 1L4.5 5L8 1" stroke="#5c6670" stroke-width="2.2" fill="none"/></svg>
<div class="t" style="left:99px;top:727px;font-size:13px;font-weight:normal;color:#1c2630"><b class="k">시</b><b class="k">스</b><b class="k">템</b></div>
<div class="a" style="left:74px;top:745px;width:135px;height:21px;background:#a8c2da;border-top:1px solid #d6e4f0;border-left:1px solid #c8d8e8;border-bottom:1px solid #7f98b0;border-right:1px solid #8aa2b8"></div>
<svg class="a" style="left:84px;top:752px" width="9" height="8"><path d="M1 1L4.5 5L8 1" stroke="#5c6670" stroke-width="2.2" fill="none"/></svg>
<div class="t" style="left:99px;top:749px;font-size:13px;font-weight:normal;color:#1c2630"><b class="k">관</b><b class="k">심</b><b class="k">종</b><b class="k">목</b></div>
<div class="a" style="left:74px;top:767px;width:135px;height:21px;background:#a8c2da;border-top:1px solid #d6e4f0;border-left:1px solid #c8d8e8;border-bottom:1px solid #7f98b0;border-right:1px solid #8aa2b8"></div>
<svg class="a" style="left:84px;top:774px" width="9" height="8"><path d="M1 1L4.5 5L8 1" stroke="#5c6670" stroke-width="2.2" fill="none"/></svg>
<div class="t" style="left:99px;top:771px;font-size:13px;font-weight:normal;color:#1c2630"><b class="k">시</b><b class="k">스</b><b class="k">템</b> <b class="k">시</b><b class="k">장</b></div>
<div class="a" style="left:74px;top:789px;width:135px;height:21px;background:#a8c2da;border-top:1px solid #d6e4f0;border-left:1px solid #c8d8e8;border-bottom:1px solid #7f98b0;border-right:1px solid #8aa2b8"></div>
<svg class="a" style="left:84px;top:796px" width="9" height="8"><path d="M1 1L4.5 5L8 1" stroke="#5c6670" stroke-width="2.2" fill="none"/></svg>
<div class="t" style="left:99px;top:793px;font-size:13px;font-weight:normal;color:#1c2630"><b class="k">참</b><b class="k">조</b><b class="k">데</b><b class="k">이</b><b class="k">터</b></div>
<div class="a" style="left:74px;top:811px;width:135px;height:21px;background:#a8c2da;border-top:1px solid #d6e4f0;border-left:1px solid #c8d8e8;border-bottom:1px solid #7f98b0;border-right:1px solid #8aa2b8"></div>
<svg class="a" style="left:84px;top:818px" width="9" height="8"><path d="M1 1L4.5 5L8 1" stroke="#5c6670" stroke-width="2.2" fill="none"/></svg>
<div class="t" style="left:99px;top:815px;font-size:13px;font-weight:normal;color:#1c2630"><b class="k">시</b><b class="k">스</b><b class="k">템</b> <b class="k">도</b><b class="k">구</b></div>
<div class="a" style="left:74px;top:833px;width:135px;height:21px;background:#a8c2da;border-top:1px solid #d6e4f0;border-left:1px solid #c8d8e8;border-bottom:1px solid #7f98b0;border-right:1px solid #8aa2b8"></div>
<svg class="a" style="left:84px;top:840px" width="9" height="8"><path d="M1 1L4.5 5L8 1" stroke="#5c6670" stroke-width="2.2" fill="none"/></svg>
<div class="t" style="left:99px;top:837px;font-size:13px;font-weight:normal;color:#1c2630">YesLanguage <b class="k">편</b>...</div>
<svg class="a" style="left:213px;top:142px" width="1035" height="695" viewBox="213 142 1035 695" shape-rendering="crispEdges"><rect x="213" y="142" width="1035" height="695" fill="#fff"/><g stroke="#c0c0c0" stroke-width="1"><path d="M247.5 143V815"/><path d="M295.5 143V815"/><path d="M343.5 143V815"/><path d="M391.5 143V815"/><path d="M439.5 143V815"/><path d="M487.5 143V815"/><path d="M535.5 143V815"/><path d="M583.5 143V815"/><path d="M631.5 143V815"/><path d="M679.5 143V815"/><path d="M727.5 143V815"/><path d="M775.5 143V815"/><path d="M823.5 143V815"/><path d="M871.5 143V815"/><path d="M919.5 143V815"/><path d="M967.5 143V815"/><path d="M1015.5 143V815"/><path d="M1063.5 143V815"/><path d="M1111.5 143V815"/><path d="M1159.5 143V815"/></g><g stroke="#c4c4c4" stroke-dasharray="2,2"><path d="M214 461.5H1189"/><path d="M214 395.5H1189"/><path d="M214 328.5H1189"/><path d="M214 262.5H1189"/><path d="M214 196.5H1189"/><path d="M214 640.5H1189"/><path d="M214 585.5H1189"/><path d="M214 530.5H1189"/><path d="M214 669.5H1189"/><path d="M214 721.5H1189"/><path d="M214 773.5H1189"/></g><g stroke="#000"><path d="M213 142.5H1248"/><path d="M213 478.5H1189"/><path d="M213 646.5H1189"/><path d="M213 815.5H1189"/><path d="M1189.5 142V816"/></g><path d="M1190 475.5h4 M1190 462.5h6 M1190 448.5h4 M1190 435.5h4 M1190 422.5h4 M1190 408.5h4 M1190 395.5h6 M1190 382.5h4 M1190 369.5h4 M1190 356.5h4 M1190 342.5h4 M1190 329.5h6 M1190 316.5h4 M1190 302.5h4 M1190 289.5h4 M1190 276.5h4 M1190 263.5h6 M1190 250.5h4 M1190 236.5h4 M1190 223.5h4 M1190 210.5h4 M1190 196.5h6 M1190 183.5h4 M1190 170.5h4 M1190 157.5h4 M1190 640.5h6 M1190 585.5h6 M1190 530.5h6 M1190 799.5h4 M1190 773.5h6 M1190 747.5h4 M1190 721.5h6 M1190 695.5h4 M1190 669.5h6" stroke="#000"/><g stroke="#000"><path d="M247.5 816V820"/><path d="M295.5 816V820"/><path d="M343.5 816V820"/><path d="M391.5 816V820"/><path d="M439.5 816V820"/><path d="M487.5 816V820"/><path d="M535.5 816V820"/><path d="M583.5 816V820"/><path d="M631.5 816V820"/><path d="M679.5 816V820"/><path d="M727.5 816V820"/><path d="M775.5 816V820"/><path d="M823.5 816V820"/><path d="M871.5 816V820"/><path d="M919.5 816V820"/><path d="M967.5 816V820"/><path d="M1015.5 816V820"/><path d="M1063.5 816V820"/><path d="M1111.5 816V820"/><path d="M1159.5 816V820"/></g><path d="M218 628h3V641h-3ZM222 629h3V641h-3ZM226 629h3V641h-3ZM230 633h3V641h-3ZM234 634h3V641h-3ZM238 630h3V641h-3ZM242 634h3V641h-3ZM246 629h3V641h-3ZM250 633h3V641h-3ZM254 625h3V641h-3ZM258 630h3V641h-3ZM262 633h3V641h-3ZM266 628h3V641h-3ZM270 632h3V641h-3ZM274 631h3V641h-3ZM278 635h3V641h-3ZM282 632h3V641h-3ZM286 635h3V641h-3ZM290 634h3V641h-3ZM294 636h3V641h-3ZM298 637h3V641h-3ZM302 636h3V641h-3ZM306 636h3V641h-3ZM310 635h3V641h-3ZM314 637h3V641h-3ZM318 637h3V641h-3ZM322 638h3V641h-3ZM326 636h3V641h-3ZM330 636h3V641h-3ZM334 634h3V641h-3ZM338 636h3V641h-3ZM342 586h3V641h-3ZM346 606h3V641h-3ZM350 625h3V641h-3ZM354 628h3V641h-3ZM358 628h3V641h-3ZM362 632h3V641h-3ZM366 634h3V641h-3ZM370 628h3V641h-3ZM374 630h3V641h-3ZM378 604h3V641h-3ZM382 622h3V641h-3ZM386 632h3V641h-3ZM390 635h3V641h-3ZM394 636h3V641h-3ZM398 636h3V641h-3ZM402 636h3V641h-3ZM406 635h3V641h-3ZM410 635h3V641h-3ZM414 635h3V641h-3ZM418 636h3V641h-3ZM422 637h3V641h-3ZM426 636h3V641h-3ZM430 626h3V641h-3ZM434 632h3V641h-3ZM438 629h3V641h-3ZM442 631h3V641h-3ZM446 622h3V641h-3ZM450 562h3V641h-3ZM454 535h3V641h-3ZM458 602h3V641h-3ZM462 593h3V641h-3ZM466 610h3V641h-3ZM470 567h3V641h-3ZM474 572h3V641h-3ZM478 618h3V641h-3ZM482 618h3V641h-3ZM486 524h3V641h-3ZM490 595h3V641h-3ZM494 607h3V641h-3ZM498 589h3V641h-3ZM502 606h3V641h-3ZM506 619h3V641h-3ZM510 497h3V641h-3ZM514 563h3V641h-3ZM518 609h3V641h-3ZM522 536h3V641h-3ZM526 587h3V641h-3ZM530 620h3V641h-3ZM534 629h3V641h-3ZM538 627h3V641h-3ZM542 626h3V641h-3ZM546 635h3V641h-3ZM550 635h3V641h-3ZM554 635h3V641h-3ZM558 632h3V641h-3ZM562 631h3V641h-3ZM566 634h3V641h-3ZM570 632h3V641h-3ZM574 631h3V641h-3ZM578 634h3V641h-3ZM582 633h3V641h-3ZM586 631h3V641h-3ZM590 624h3V641h-3ZM594 631h3V641h-3ZM598 634h3V641h-3ZM602 632h3V641h-3ZM606 628h3V641h-3ZM610 624h3V641h-3ZM614 621h3V641h-3ZM618 627h3V641h-3ZM622 631h3V641h-3ZM626 633h3V641h-3ZM630 610h3V641h-3ZM634 627h3V641h-3ZM638 631h3V641h-3ZM642 631h3V641h-3ZM646 635h3V641h-3ZM650 634h3V641h-3ZM654 632h3V641h-3ZM658 628h3V641h-3ZM662 636h3V641h-3ZM666 630h3V641h-3ZM670 635h3V641h-3ZM674 635h3V641h-3ZM678 630h3V641h-3ZM682 628h3V641h-3ZM686 625h3V641h-3ZM690 626h3V641h-3ZM694 631h3V641h-3ZM698 630h3V641h-3ZM702 631h3V641h-3ZM706 635h3V641h-3ZM710 629h3V641h-3ZM714 627h3V641h-3ZM718 619h3V641h-3ZM722 630h3V641h-3ZM726 628h3V641h-3ZM730 620h3V641h-3ZM734 625h3V641h-3ZM738 623h3V641h-3ZM742 624h3V641h-3ZM746 624h3V641h-3ZM750 621h3V641h-3ZM754 617h3V641h-3ZM758 625h3V641h-3ZM762 629h3V641h-3ZM766 623h3V641h-3ZM770 630h3V641h-3ZM774 630h3V641h-3ZM778 632h3V641h-3ZM782 632h3V641h-3ZM786 630h3V641h-3ZM790 628h3V641h-3ZM794 624h3V641h-3ZM798 629h3V641h-3ZM802 633h3V641h-3ZM806 632h3V641h-3ZM810 633h3V641h-3ZM814 634h3V641h-3ZM818 629h3V641h-3ZM822 631h3V641h-3ZM826 635h3V641h-3ZM830 635h3V641h-3ZM834 631h3V641h-3ZM838 635h3V641h-3ZM842 627h3V641h-3ZM846 634h3V641h-3ZM850 636h3V641h-3ZM854 609h3V641h-3ZM858 590h3V641h-3ZM862 572h3V641h-3ZM866 601h3V641h-3ZM870 598h3V641h-3ZM874 623h3V641h-3ZM878 600h3V641h-3ZM882 599h3V641h-3ZM886 597h3V641h-3ZM890 612h3V641h-3ZM894 616h3V641h-3ZM898 611h3V641h-3ZM902 622h3V641h-3ZM906 609h3V641h-3ZM910 617h3V641h-3ZM914 621h3V641h-3ZM918 627h3V641h-3ZM922 629h3V641h-3ZM926 626h3V641h-3ZM930 631h3V641h-3ZM934 631h3V641h-3ZM938 626h3V641h-3ZM942 570h3V641h-3ZM946 588h3V641h-3ZM950 612h3V641h-3ZM954 548h3V641h-3ZM958 596h3V641h-3ZM962 599h3V641h-3ZM966 615h3V641h-3ZM970 616h3V641h-3ZM974 602h3V641h-3ZM978 614h3V641h-3ZM982 621h3V641h-3ZM986 615h3V641h-3ZM990 619h3V641h-3ZM994 605h3V641h-3ZM998 594h3V641h-3ZM1002 626h3V641h-3ZM1006 627h3V641h-3ZM1010 616h3V641h-3ZM1014 623h3V641h-3ZM1018 565h3V641h-3ZM1022 616h3V641h-3ZM1026 617h3V641h-3ZM1030 623h3V641h-3ZM1034 612h3V641h-3ZM1038 583h3V641h-3ZM1042 511h3V641h-3ZM1046 575h3V641h-3ZM1050 612h3V641h-3ZM1054 617h3V641h-3ZM1058 616h3V641h-3ZM1062 625h3V641h-3ZM1066 628h3V641h-3ZM1070 625h3V641h-3ZM1074 628h3V641h-3ZM1078 578h3V641h-3ZM1082 610h3V641h-3ZM1086 616h3V641h-3ZM1090 611h3V641h-3ZM1094 606h3V641h-3ZM1098 627h3V641h-3ZM1102 623h3V641h-3ZM1106 623h3V641h-3ZM1110 628h3V641h-3ZM1114 605h3V641h-3ZM1118 607h3V641h-3ZM1122 613h3V641h-3ZM1126 605h3V641h-3ZM1130 618h3V641h-3ZM1134 608h3V641h-3ZM1138 619h3V641h-3ZM1142 618h3V641h-3ZM1146 625h3V641h-3ZM1150 620h3V641h-3ZM1154 581h3V641h-3ZM1158 542h3V641h-3ZM1162 601h3V641h-3Z" fill="#0000d0"/><path d="M255 457h1V460h-1Z M267 430h1V444h-1Z M271 426h1V438h-1Z M279 447h1V449h-1Z M287 447h1V449h-1Z M303 452h1V454h-1Z M315 456h1V457h-1Z M323 456h1V457h-1Z M327 456h1V457h-1Z M331 456h1V457h-1Z M343 454h1V459h-1Z M375 458h1V460h-1Z M451 458h1V460h-1Z M459 458h1V460h-1Z M483 458h1V460h-1Z M495 458h1V460h-1Z M535 456h1V458h-1Z M539 454h1V458h-1Z M551 456h1V459h-1Z M559 456h1V460h-1Z M563 456h1V459h-1Z M571 456h1V460h-1Z M575 456h1V460h-1Z M579 456h1V460h-1Z M587 456h1V460h-1Z M591 456h1V459h-1Z M599 456h1V460h-1Z M603 456h1V458h-1Z M607 456h1V458h-1Z M615 456h1V459h-1Z M623 456h1V460h-1Z M631 456h1V460h-1Z M639 456h1V460h-1Z M651 457h1V460h-1Z M659 456h1V459h-1Z M667 456h1V459h-1Z M671 456h1V458h-1Z M679 456h1V458h-1Z M683 455h1V458h-1Z M691 454h1V458h-1Z M695 454h1V457h-1Z M707 453h1V455h-1Z M711 452h1V456h-1Z M715 450h1V454h-1Z M723 451h1V452h-1Z M727 447h1V451h-1Z M731 438h1V448h-1Z M739 433h1V443h-1Z M743 422h1V436h-1Z M747 403h1V422h-1Z M759 420h1V435h-1Z M791 433h1V439h-1Z M795 429h1V435h-1Z M807 434h1V438h-1Z M811 432h1V436h-1Z M823 438h1V444h-1Z M827 440h1V443h-1Z M839 442h1V444h-1Z M843 439h1V444h-1Z M855 432h1V444h-1Z M859 423h1V434h-1Z M863 397h1V429h-1Z M867 406h1V418h-1Z M871 384h1V407h-1Z M879 362h1V411h-1Z M883 296h1V373h-1Z M887 260h1V343h-1Z M899 319h1V373h-1Z M903 294h1V325h-1Z M923 337h1V362h-1Z M931 341h1V357h-1Z M947 403h1V430h-1Z M951 381h1V405h-1Z M955 178h1V381h-1Z M971 305h1V347h-1Z M979 313h1V340h-1Z M983 305h1V336h-1Z M995 325h1V356h-1Z M999 284h1V338h-1Z M1011 316h1V343h-1Z M1031 415h1V418h-1Z M1039 404h1V417h-1Z M1043 370h1V414h-1Z M1047 369h1V391h-1Z M1075 419h1V423h-1Z M1079 390h1V423h-1Z M1087 403h1V415h-1Z M1091 394h1V405h-1Z M1111 418h1V426h-1Z M1115 408h1V422h-1Z M1119 409h1V419h-1Z M1123 411h1V417h-1Z M1127 405h1V415h-1Z M1135 413h1V419h-1Z M1143 418h1V423h-1Z M1151 415h1V422h-1Z M1155 390h1V420h-1Z M1159 364h1V394h-1Z M1163 356h1V376h-1Z " fill="#a81818"/><path d="M259 456h1V459h-1Z M263 457h1V460h-1Z M275 430h1V449h-1Z M283 443h1V451h-1Z M291 448h1V455h-1Z M295 454h1V456h-1Z M307 451h1V454h-1Z M311 455h1V458h-1Z M319 456h1V458h-1Z M335 456h1V458h-1Z M347 457h1V460h-1Z M355 457h1V458h-1Z M367 459h1V460h-1Z M371 458h1V460h-1Z M383 458h1V460h-1Z M395 459h1V461h-1Z M427 460h1V462h-1Z M471 458h1V460h-1Z M511 458h1V460h-1Z M543 455h1V458h-1Z M547 456h1V458h-1Z M555 456h1V460h-1Z M567 456h1V460h-1Z M583 456h1V460h-1Z M595 456h1V460h-1Z M611 456h1V459h-1Z M619 456h1V460h-1Z M627 456h1V460h-1Z M635 456h1V460h-1Z M643 456h1V460h-1Z M647 457h1V460h-1Z M655 457h1V460h-1Z M663 456h1V460h-1Z M675 456h1V459h-1Z M687 455h1V458h-1Z M699 454h1V457h-1Z M703 454h1V456h-1Z M719 448h1V453h-1Z M735 439h1V444h-1Z M751 404h1V428h-1Z M755 416h1V438h-1Z M763 425h1V432h-1Z M767 422h1V434h-1Z M771 430h1V436h-1Z M775 429h1V436h-1Z M779 433h1V440h-1Z M783 435h1V439h-1Z M787 434h1V440h-1Z M799 430h1V434h-1Z M803 433h1V438h-1Z M815 433h1V440h-1Z M819 440h1V444h-1Z M831 440h1V443h-1Z M835 439h1V444h-1Z M847 441h1V443h-1Z M851 443h1V445h-1Z M875 398h1V409h-1Z M891 276h1V336h-1Z M895 332h1V382h-1Z M907 299h1V354h-1Z M911 326h1V359h-1Z M915 343h1V370h-1Z M919 353h1V373h-1Z M927 336h1V361h-1Z M935 346h1V371h-1Z M939 356h1V414h-1Z M943 404h1V431h-1Z M959 225h1V311h-1Z M963 307h1V338h-1Z M967 305h1V338h-1Z M975 329h1V356h-1Z M987 281h1V338h-1Z M991 338h1V353h-1Z M1003 321h1V343h-1Z M1007 331h1V339h-1Z M1015 321h1V343h-1Z M1019 330h1V381h-1Z M1023 349h1V409h-1Z M1027 410h1V418h-1Z M1035 411h1V418h-1Z M1051 384h1V406h-1Z M1055 405h1V414h-1Z M1059 410h1V419h-1Z M1063 413h1V421h-1Z M1067 417h1V423h-1Z M1071 415h1V423h-1Z M1083 400h1V419h-1Z M1095 385h1V406h-1Z M1099 400h1V411h-1Z M1103 407h1V419h-1Z M1107 415h1V423h-1Z M1131 409h1V420h-1Z M1139 415h1V423h-1Z M1147 419h1V423h-1Z " fill="#000080"/><path d="M254 457h3V460h-3Z M266 433h3V440h-3Z M270 431h3V434h-3Z M278 447h3V449h-3Z M286 447h3V449h-3Z M302 452h3V454h-3Z M314 456h3V457h-3Z M322 456h3V457h-3Z M326 456h3V457h-3Z M330 456h3V457h-3Z M342 456h3V458h-3Z M374 458h3V460h-3Z M450 459h3V460h-3Z M458 458h3V460h-3Z M482 458h3V460h-3Z M494 458h3V460h-3Z M534 456h3V458h-3Z M538 456h3V458h-3Z M550 457h3V459h-3Z M558 458h3V460h-3Z M562 457h3V459h-3Z M570 458h3V460h-3Z M574 458h3V460h-3Z M578 458h3V460h-3Z M586 458h3V460h-3Z M590 457h3V459h-3Z M598 458h3V460h-3Z M602 456h3V458h-3Z M606 456h3V458h-3Z M614 457h3V459h-3Z M622 458h3V460h-3Z M630 458h3V460h-3Z M638 458h3V460h-3Z M650 458h3V460h-3Z M658 457h3V459h-3Z M666 457h3V459h-3Z M670 456h3V458h-3Z M678 456h3V458h-3Z M682 456h3V458h-3Z M690 456h3V458h-3Z M694 455h3V457h-3Z M706 453h3V455h-3Z M710 452h3V456h-3Z M714 450h3V454h-3Z M722 451h3V452h-3Z M726 447h3V451h-3Z M730 442h3V448h-3Z M738 435h3V443h-3Z M742 422h3V436h-3Z M746 409h3V422h-3Z M758 427h3V432h-3Z M790 436h3V438h-3Z M794 434h3V435h-3Z M806 434h3V438h-3Z M810 435h3V436h-3Z M822 442h3V444h-3Z M826 440h3V443h-3Z M838 442h3V444h-3Z M842 442h3V443h-3Z M854 434h3V444h-3Z M858 428h3V434h-3Z M862 413h3V428h-3Z M866 410h3V412h-3Z M870 399h3V407h-3Z M878 367h3V411h-3Z M882 300h3V368h-3Z M886 278h3V307h-3Z M898 322h3V372h-3Z M902 302h3V321h-3Z M922 342h3V362h-3Z M930 350h3V357h-3Z M946 405h3V425h-3Z M950 381h3V404h-3Z M954 238h3V381h-3Z M970 333h3V343h-3Z M978 334h3V340h-3Z M982 311h3V336h-3Z M994 347h3V351h-3Z M998 323h3V338h-3Z M1010 338h3V341h-3Z M1030 415h3V418h-3Z M1038 413h3V416h-3Z M1042 387h3V414h-3Z M1046 386h3V391h-3Z M1074 420h3V422h-3Z M1078 400h3V421h-3Z M1086 405h3V415h-3Z M1090 395h3V404h-3Z M1110 419h3V426h-3Z M1114 418h3V421h-3Z M1118 415h3V419h-3Z M1122 414h3V416h-3Z M1126 412h3V414h-3Z M1134 415h3V418h-3Z M1142 420h3V423h-3Z M1150 419h3V422h-3Z M1154 394h3V419h-3Z M1158 371h3V394h-3Z M1162 356h3V374h-3Z " fill="#d00000"/><path d="M258 456h3V459h-3Z M262 457h3V460h-3Z M274 431h3V449h-3Z M282 448h3V451h-3Z M290 450h3V454h-3Z M294 454h3V456h-3Z M306 451h3V454h-3Z M310 455h3V458h-3Z M318 456h3V458h-3Z M334 456h3V458h-3Z M346 457h3V460h-3Z M354 457h3V458h-3Z M366 459h3V460h-3Z M370 458h3V460h-3Z M382 458h3V460h-3Z M394 459h3V461h-3Z M426 460h3V462h-3Z M470 458h3V460h-3Z M510 458h3V460h-3Z M542 456h3V458h-3Z M546 456h3V458h-3Z M554 458h3V460h-3Z M566 458h3V460h-3Z M582 458h3V460h-3Z M594 458h3V460h-3Z M610 457h3V459h-3Z M618 458h3V460h-3Z M626 458h3V460h-3Z M634 458h3V460h-3Z M642 458h3V460h-3Z M646 458h3V460h-3Z M654 458h3V460h-3Z M662 458h3V460h-3Z M674 457h3V459h-3Z M686 456h3V458h-3Z M698 455h3V457h-3Z M702 454h3V456h-3Z M718 450h3V453h-3Z M734 442h3V443h-3Z M750 409h3V426h-3Z M754 426h3V432h-3Z M762 426h3V429h-3Z M766 429h3V433h-3Z M770 431h3V434h-3Z M774 432h3V435h-3Z M778 434h3V439h-3Z M782 435h3V439h-3Z M786 436h3V439h-3Z M798 432h3V434h-3Z M802 434h3V437h-3Z M814 436h3V440h-3Z M818 440h3V444h-3Z M830 440h3V443h-3Z M834 442h3V444h-3Z M846 441h3V443h-3Z M850 443h3V445h-3Z M874 399h3V409h-3Z M890 281h3V333h-3Z M894 332h3V372h-3Z M906 299h3V347h-3Z M910 345h3V350h-3Z M914 345h3V356h-3Z M918 353h3V362h-3Z M926 338h3V355h-3Z M934 347h3V369h-3Z M938 366h3V414h-3Z M942 422h3V426h-3Z M958 238h3V309h-3Z M962 308h3V311h-3Z M966 306h3V338h-3Z M974 332h3V343h-3Z M986 307h3V338h-3Z M990 339h3V351h-3Z M1002 326h3V338h-3Z M1006 337h3V338h-3Z M1014 332h3V343h-3Z M1018 337h3V370h-3Z M1022 367h3V409h-3Z M1026 410h3V418h-3Z M1034 415h3V418h-3Z M1050 387h3V406h-3Z M1054 405h3V414h-3Z M1058 413h3V416h-3Z M1062 415h3V419h-3Z M1066 419h3V421h-3Z M1070 419h3V421h-3Z M1082 401h3V415h-3Z M1094 396h3V404h-3Z M1098 403h3V408h-3Z M1102 408h3V419h-3Z M1106 417h3V423h-3Z M1130 411h3V419h-3Z M1138 417h3V423h-3Z M1146 420h3V423h-3Z " fill="#0000b0"/></svg>
<svg class="a" style="left:213px;top:142px" width="1035" height="695" viewBox="213 142 1035 695" shape-rendering="crispEdges"><polyline points="213,460.5 249.9,459.8 264.1,458 273.3,446.9 283.2,442.2 288.1,445.7 293,450.6 299.2,452.5 309,453.7 317.6,456.2 336,456.8 348.4,457.4 360.7,458 369.3,458.6 385.3,459.2 413,459.6 440,459.8 480,459.5 520,459.6 540,457.5 600,457.8 640,458 660,458 680,456.5 700,454.8 711.1,454.2 723.3,452 733.2,447.6 739.3,443.1 744.3,436.5 747.6,429.8 752,425.4 759.2,423.2 764.2,425.4 768.7,429.3 775.3,432 784.2,435.4 788.6,435.9 797.5,434.8 806.3,435.4 815.2,436.5 821.8,439.8 832.9,442 844,443.1 855,443.1 861.7,433.2 869.4,419.9 877.2,408.8 883.2,367.9 892.1,335.7 899.3,321.4 906.4,328.6 911.8,337.5 918.9,341.1 924.3,350 931.4,353.6 938.6,366.1 949.3,394.6 952.9,378.6 958.2,346.4 965.4,328.6 971.6,307.1 976.1,325 981.4,332.1 988.6,332.1 995.7,333.9 1002.9,337.5 1013.6,339.3 1018.9,341.1 1024.4,365.8 1030.8,391.4 1038.8,410.6 1046.7,404.2 1053.1,401 1059.5,401 1065.9,410.6 1072.3,418.6 1077.1,420.2 1083.5,413.8 1089.9,404.2 1096.3,405 1102.7,407.4 1109,412.2 1115.4,418.6 1121.8,417.8 1131.4,413.8 1141,417 1149,420.2 1153.8,417 1159.4,405.8 1163.4,393" fill="none" stroke="#c01010" stroke-width="1" stroke-linejoin="round"/><polyline points="213,460.5 264.1,459.2 273.3,456.8 283.2,454.9 299.2,454.1 317.6,452.5 345.3,452.5 348.4,453.7 354.5,455.5 369.3,456.8 413,458.6 460,459.2 520,459.4 560,458.6 640,458.6 680,457.5 700,456.4 728.8,455.3 738.8,452 749.8,446.4 766.4,440.9 777.5,438.1 788.6,435.4 797.5,433.7 806.3,432.6 821.8,432.6 827.4,435.4 844,438.7 855,439.8 863.9,437.6 872.8,434.3 880,428.7 886.8,416.1 895.7,405.4 906.4,387.5 918.9,375 931.4,360.7 938.6,357.1 951.1,356.3 960,345.5 970.7,349.1 985,348.2 995.7,346.4 1013.6,342.9 1020.7,339.3 1029.2,340.3 1037.2,353.1 1045.1,361.9 1057.9,373.8 1073.9,388.2 1083.5,397.8 1096.3,405.8 1109,410.6 1121.8,410.6 1137.8,414.6 1152.2,414.6 1162.6,409.8" fill="none" stroke="#1010a8" stroke-width="1" stroke-linejoin="round"/><polyline points="213,460.5 264.1,459.8 280.7,459 299.2,458 317.6,458 348.4,457.4 413,457.4 500,457.4 540,458.4 640,458.6 700,458.6 716.6,458.6 733.2,457 749.8,454.2 766.4,452 788.6,450.3 810.7,447.6 832.9,445.3 855,445.3 872.8,442 880,439.2 904.6,426.8 931.4,413.4 949.3,408.9 967.1,398.2 985,391.1 1002.9,383.9 1015.4,379.5 1024.4,378.6 1042,377 1057.9,373.8 1073.9,372.2 1089.9,369.8 1099.5,369 1121.8,370.6 1128.2,375.4 1137.8,377.8 1150.6,383.4 1162.6,384.2" fill="none" stroke="#107010" stroke-width="1" stroke-linejoin="round"/><polyline points="214.9,807.4 219.2,805 223.1,798.8 227.7,798.1 231.6,792.6 236.3,786.4 240.1,784.1 244,782.6 247.4,778.4 251,779.1 254.9,774.8 259.5,770.2 262.9,770.9 264.2,767.8 267.3,749.2 271.1,721.3 275.8,712 279.4,700.4 283.5,700.1 287.4,695.7 292.1,698.8 296.7,706.6 300.6,712 302.9,713.6 306.8,721.3 310.7,729.8 314.6,738.4 319.2,753.9 323.1,760.1 327.7,761.6 335.5,767.8 339.4,770.2 344,774 347.1,774.8 351.8,770.9 354.9,772.5 358.7,780.2 362.6,787.2 367.3,790.3 371.1,788 375.8,780.2 380.4,766.3 385.1,760.1 391.3,754.3 395.9,754.7 402.1,764.7 408.3,768.6 411.5,771.7 414.3,783.3 417.4,792.6 422.1,803.5 427.5,808.9 432.1,807.4 436,805 439.1,803.5 443,808.1 446.9,804.3 451.5,800.4 458.5,791.9 465.5,784.9 473.2,776.4 482.5,764.7 487.2,755.4 493.4,746.9 498,737.6 503,732.5 507.3,737.6 515.1,748.4 519.7,758.5 526.7,775.6 531.4,777.9 535.2,767.8 539.1,746.1 545.3,735.3 548.4,726 551.5,713.6 556.2,703.5 559.3,695 562.4,693.4 565.5,695.7 570.9,700.4 577.9,708.9 581.7,715.1 587.2,726 591,727.5 594.9,726.3 599.6,728.3 600.1,728.3 604,728.3 607.9,726.7 611.7,723.2 615.6,723.2 619.5,721.6 623.4,714.3 628,712 631.9,711.7 638.9,716.7 643.5,722.9 649.7,733.7 654.4,743.8 659.8,755.4 663.7,769.4 669.9,782.6 675.3,787.2 679.9,784.9 686.9,770.2 692.3,763.2 696.2,747.7 699.3,733.7 704,722.9 708.6,707.4 715.6,686.4 721,682.6 727.2,677.1 731.1,670.2 735,677.1 738.9,678.4 743.5,675.3 747.4,672.5 752,681 759.8,699.6 767.5,724.4 775.3,752.3 781.5,772.5 790.8,789.5 793.7,793.4 799.9,798.1 806.1,801.6 811.5,802.7 818.5,806.1 823.1,802.7 829.3,786.4 834.7,769.4 841.7,757 847.1,751.6 851.8,752.3 857.2,749.2 863.4,739.1 868.1,724.4 871.2,711.2 875.8,708.1 881.2,696.5 887.4,670.2 891.3,666.6 895.2,674 903,679.5 908.4,695 913,710.5 919.2,734.5 925.4,750.8 934.7,765.5 942.5,781 947.1,786.4 951,786.1 956.4,783 961.1,784.1 967.3,788.8 971.9,785.7 978.1,782.6 982.8,773.3 985.7,769.4 991.1,764 996.5,758.5 1001.2,756.7 1007.4,754.3 1011.2,756.2 1015.9,759.3 1023.6,759.3 1027.5,764.4 1030.6,762.4 1035.3,767.8 1039.6,773.3 1043,770.9 1047.7,763.2 1052.3,758.5 1057.7,756.4 1063.2,756.4 1067.8,760.9 1071.7,764.4 1075.6,763.2 1080.2,757 1086.4,750.8 1091.1,743.5 1095,745.3 1100.4,757 1105,770.9 1109.7,781 1114.3,783.3 1119,777.1 1126,760.9 1129.8,752.3 1136,741.5 1142.2,729.1 1148.4,718.2 1154.6,705.8 1159.3,693.4 1163.6,681" fill="none" stroke="#101060" stroke-width="1" stroke-linejoin="round"/><path d="M941 175.5H956M952 172.5L956 175.5" stroke="#a01818" fill="none"/><path d="M538 465.5H524M528 462.5L524 465.5" stroke="#1818a0" fill="none"/></svg>
<svg class="a" style="left:0;top:0" width="1625" height="1064"><text x="213" y="155" fill="#000" font-size="13" font-family="Liberation Sans" font-weight="normal" text-anchor="start" textLength="18" lengthAdjust="spacingAndGlyphs">HLB</text><text x="241" y="155" fill="#000" font-size="13" font-family="Liberation Sans" font-weight="normal" text-anchor="start" textLength="77" lengthAdjust="spacingAndGlyphs">단순이동평균3</text><text x="324" y="155" fill="#000" font-size="13" font-family="Liberation Sans" font-weight="normal" text-anchor="start" textLength="50" lengthAdjust="spacingAndGlyphs">(5,20,60)</text><text x="379" y="155" fill="#000" font-size="13" font-family="Liberation Sans" font-weight="normal" text-anchor="start" textLength="59" lengthAdjust="spacingAndGlyphs">2024/02/29</text><text x="443" y="155" fill="#c01010" font-size="13" font-family="Liberation Sans" font-weight="normal" text-anchor="start" textLength="33" lengthAdjust="spacingAndGlyphs">51,630</text><text x="481" y="155" fill="#1010a0" font-size="13" font-family="Liberation Sans" font-weight="normal" text-anchor="start" textLength="33" lengthAdjust="spacingAndGlyphs">39,385</text><text x="519" y="155" fill="#107010" font-size="13" font-family="Liberation Sans" font-weight="normal" text-anchor="start" textLength="33" lengthAdjust="spacingAndGlyphs">58,006</text><text x="1041" y="167" fill="#c01010" font-size="13" font-family="Liberation Sans" font-weight="normal" text-anchor="start" textLength="59" lengthAdjust="spacingAndGlyphs">H: -63,16%</text><text x="1111" y="167" fill="#1010a0" font-size="13" font-family="Liberation Sans" font-weight="normal" text-anchor="start" textLength="74" lengthAdjust="spacingAndGlyphs">L: 43,196,70%</text><text x="815" y="178" fill="#a01818" font-size="13" font-family="Liberation Sans" font-weight="normal" text-anchor="start" textLength="113" lengthAdjust="spacingAndGlyphs">213,900 (2019/10/31)</text><text x="544" y="467" fill="#1818a0" font-size="13" font-family="Liberation Sans" font-weight="normal" text-anchor="start" textLength="90" lengthAdjust="spacingAndGlyphs">182 (2010/10/29)</text><text x="213" y="490" fill="#000" font-size="13" font-family="Liberation Sans" font-weight="normal" text-anchor="start" textLength="35" lengthAdjust="spacingAndGlyphs">거래량</text><text x="258" y="490" fill="#000" font-size="13" font-family="Liberation Sans" font-weight="normal" text-anchor="start" textLength="59" lengthAdjust="spacingAndGlyphs">2024/02/29</text><text x="322" y="490" fill="#1010a0" font-size="13" font-family="Liberation Sans" font-weight="normal" text-anchor="start" textLength="72" lengthAdjust="spacingAndGlyphs">34,782,113,00</text><text x="213" y="658" fill="#000" font-size="13" font-family="Liberation Sans" font-weight="normal" text-anchor="start" textLength="39" lengthAdjust="spacingAndGlyphs">#Inertia</text><text x="261" y="658" fill="#000" font-size="13" font-family="Liberation Sans" font-weight="normal" text-anchor="start" textLength="37" lengthAdjust="spacingAndGlyphs">(10,14)</text><text x="303" y="658" fill="#000" font-size="13" font-family="Liberation Sans" font-weight="normal" text-anchor="start" textLength="60" lengthAdjust="spacingAndGlyphs">2024/02/29</text><text x="368" y="658" fill="#1010a0" font-size="13" font-family="Liberation Sans" font-weight="normal" text-anchor="start" textLength="27" lengthAdjust="spacingAndGlyphs">75,84</text><text x="1199" y="200.5" fill="#000" font-size="13" font-family="Liberation Sans" font-weight="normal" text-anchor="start" textLength="36" lengthAdjust="spacingAndGlyphs">200000</text><text x="1199" y="266.5" fill="#000" font-size="13" font-family="Liberation Sans" font-weight="normal" text-anchor="start" textLength="36" lengthAdjust="spacingAndGlyphs">150000</text><text x="1199" y="332.5" fill="#000" font-size="13" font-family="Liberation Sans" font-weight="normal" text-anchor="start" textLength="36" lengthAdjust="spacingAndGlyphs">100000</text><text x="1199" y="399.5" fill="#000" font-size="13" font-family="Liberation Sans" font-weight="normal" text-anchor="start" textLength="30" lengthAdjust="spacingAndGlyphs">50000</text><text x="1199" y="465.5" fill="#000" font-size="13" font-family="Liberation Sans" font-weight="normal" text-anchor="start" textLength="6" lengthAdjust="spacingAndGlyphs">0</text><text x="1199" y="535.0" fill="#000" font-size="13" font-family="Liberation Sans" font-weight="normal" text-anchor="start" textLength="44" lengthAdjust="spacingAndGlyphs">10000,00</text><text x="1199" y="590.0" fill="#000" font-size="13" font-family="Liberation Sans" font-weight="normal" text-anchor="start" textLength="39" lengthAdjust="spacingAndGlyphs">5000,00</text><text x="1199" y="674.0" fill="#000" font-size="13" font-family="Liberation Sans" font-weight="normal" text-anchor="start" textLength="29" lengthAdjust="spacingAndGlyphs">80,00</text><text x="1199" y="726.0" fill="#000" font-size="13" font-family="Liberation Sans" font-weight="normal" text-anchor="start" textLength="29" lengthAdjust="spacingAndGlyphs">60,00</text><text x="1199" y="778.0" fill="#000" font-size="13" font-family="Liberation Sans" font-weight="normal" text-anchor="start" textLength="29" lengthAdjust="spacingAndGlyphs">40,00</text><rect x="1192.5" y="634.5" width="41" height="13" fill="#fff" stroke="#000"/><text x="1195" y="645" fill="#000" font-size="13" font-family="Liberation Sans" font-weight="normal" text-anchor="start" textLength="36" lengthAdjust="spacingAndGlyphs">x10000</text><rect x="1208" y="345" width="30" height="12" fill="#d01010"/><text x="1209" y="356" fill="#fff" font-size="13" font-family="Liberation Sans" font-weight="normal" text-anchor="start" textLength="29" lengthAdjust="spacingAndGlyphs">78800</text><path d="M1197 365H1204L1200.5 361Z" fill="#c01010"/><text x="1209" y="367" fill="#c01010" font-size="13" font-family="Liberation Sans" font-weight="normal" text-anchor="start" textLength="29" lengthAdjust="spacingAndGlyphs">10200</text><rect x="1178.5" y="144.5" width="9" height="9" fill="#fff" stroke="#888"/><rect x="1180.5" y="146.5" width="5" height="5" fill="none" stroke="#000"/><rect x="1167.5" y="479.5" width="8" height="8" fill="#fff" stroke="#999"/><path d="M1169.5 483.5H1173.5" stroke="#000"/><rect x="1177.5" y="479.5" width="9" height="8" fill="#fff" stroke="#999"/><path d="M1179.5 481.5L1184.5 485.5M1184.5 481.5L1179.5 485.5" stroke="#000"/><rect x="1167.5" y="647.5" width="8" height="8" fill="#fff" stroke="#999"/><path d="M1169.5 651.5H1173.5" stroke="#000"/><rect x="1177.5" y="647.5" width="9" height="8" fill="#fff" stroke="#999"/><path d="M1179.5 649.5L1184.5 653.5M1184.5 649.5L1179.5 653.5" stroke="#000"/><text x="247.5" y="833" fill="#000" font-size="13" font-family="Liberation Sans" font-weight="bold" text-anchor="middle" textLength="15" lengthAdjust="spacingAndGlyphs">05</text><text x="295.5" y="833" fill="#000" font-size="13" font-family="Liberation Sans" font-weight="bold" text-anchor="middle" textLength="15" lengthAdjust="spacingAndGlyphs">06</text><text x="343.5" y="833" fill="#000" font-size="13" font-family="Liberation Sans" font-weight="bold" text-anchor="middle" textLength="15" lengthAdjust="spacingAndGlyphs">07</text><text x="391.5" y="833" fill="#000" font-size="13" font-family="Liberation Sans" font-weight="bold" text-anchor="middle" textLength="15" lengthAdjust="spacingAndGlyphs">08</text><text x="439.5" y="833" fill="#000" font-size="13" font-family="Liberation Sans" font-weight="bold" text-anchor="middle" textLength="15" lengthAdjust="spacingAndGlyphs">09</text><text x="487.5" y="833" fill="#000" font-size="13" font-family="Liberation Sans" font-weight="bold" text-anchor="middle" textLength="15" lengthAdjust="spacingAndGlyphs">10</text><text x="535.5" y="833" fill="#000" font-size="13" font-family="Liberation Sans" font-weight="bold" text-anchor="middle" textLength="15" lengthAdjust="spacingAndGlyphs">11</text><text x="583.5" y="833" fill="#000" font-size="13" font-family="Liberation Sans" font-weight="bold" text-anchor="middle" textLength="15" lengthAdjust="spacingAndGlyphs">12</text><text x="631.5" y="833" fill="#000" font-size="13" font-family="Liberation Sans" font-weight="bold" text-anchor="middle" textLength="15" lengthAdjust="spacingAndGlyphs">13</text><text x="679.5" y="833" fill="#000" font-size="13" font-family="Liberation Sans" font-weight="bold" text-anchor="middle" textLength="15" lengthAdjust="spacingAndGlyphs">14</text><text x="727.5" y="833" fill="#000" font-size="13" font-family="Liberation Sans" font-weight="bold" text-anchor="middle" textLength="15" lengthAdjust="spacingAndGlyphs">15</text><text x="775.5" y="833" fill="#000" font-size="13" font-family="Liberation Sans" font-weight="bold" text-anchor="middle" textLength="15" lengthAdjust="spacingAndGlyphs">16</text><text x="823.5" y="833" fill="#000" font-size="13" font-family="Liberation Sans" font-weight="bold" text-anchor="middle" textLength="15" lengthAdjust="spacingAndGlyphs">17</text><text x="871.5" y="833" fill="#000" font-size="13" font-family="Liberation Sans" font-weight="bold" text-anchor="middle" textLength="15" lengthAdjust="spacingAndGlyphs">18</text><text x="919.5" y="833" fill="#000" font-size="13" font-family="Liberation Sans" font-weight="bold" text-anchor="middle" textLength="15" lengthAdjust="spacingAndGlyphs">19</text><text x="967.5" y="833" fill="#000" font-size="13" font-family="Liberation Sans" font-weight="bold" text-anchor="middle" textLength="15" lengthAdjust="spacingAndGlyphs">20</text><text x="1015.5" y="833" fill="#000" font-size="13" font-family="Liberation Sans" font-weight="bold" text-anchor="middle" textLength="15" lengthAdjust="spacingAndGlyphs">21</text><text x="1063.5" y="833" fill="#000" font-size="13" font-family="Liberation Sans" font-weight="bold" text-anchor="middle" textLength="15" lengthAdjust="spacingAndGlyphs">22</text><text x="1111.5" y="833" fill="#000" font-size="13" font-family="Liberation Sans" font-weight="bold" text-anchor="middle" textLength="15" lengthAdjust="spacingAndGlyphs">23</text><text x="1159.5" y="833" fill="#000" font-size="13" font-family="Liberation Sans" font-weight="bold" text-anchor="middle" textLength="15" lengthAdjust="spacingAndGlyphs">24</text><rect x="1171.5" y="821.5" width="14" height="14" fill="#f0f0f0" stroke="#777"/><path d="M1175 832L1176 829L1181 824L1183 826L1178 831Z" fill="none" stroke="#222"/><path d="M1174 833.5H1183" stroke="#222"/><rect x="1189.5" y="821.5" width="14" height="14" fill="#f0f0f0" stroke="#777"/><circle cx="1195" cy="827" r="3" fill="none" stroke="#000" stroke-width="1.6"/><path d="M1197 829L1201 833" stroke="#000" stroke-width="2"/><text x="1212" y="833" fill="#000" font-size="13" font-family="Liberation Sans" font-weight="normal" text-anchor="start" textLength="29" lengthAdjust="spacingAndGlyphs">02/29</text></svg>
<div class="a" style="left:1248px;top:121px;width:1px;height:736px;background:#e6f0f8"></div>
<div class="a" style="left:1253px;top:122px;width:19px;height:19px;background:#eeeeee;border:1px solid #8a96a4;box-shadow:inset 1px 1px 0 #fff"></div>
<div class="a" style="left:1253px;top:147px;width:19px;height:19px;background:#eeeeee;border:1px solid #8a96a4;box-shadow:inset 1px 1px 0 #fff"></div>
<div class="a" style="left:1251px;top:170px;width:23px;height:23px;background:#d8e4ee;border:1px solid #f0f6fa"></div>
<div class="a" style="left:1253px;top:172px;width:19px;height:19px;background:#f8f8f8;border:1px solid #404858;box-shadow:inset 1px 1px 0 #fff"></div>
<div class="a" style="left:1253px;top:197px;width:19px;height:19px;background:#c8d0d8;border:1px solid #8a96a4;box-shadow:inset 1px 1px 0 #fff"></div>
<div class="a" style="left:1253px;top:222px;width:19px;height:19px;background:#c8d0d8;border:1px solid #8a96a4;box-shadow:inset 1px 1px 0 #fff"></div>
<div class="a" style="left:1253px;top:247px;width:19px;height:19px;background:#c8d0d8;border:1px solid #8a96a4;box-shadow:inset 1px 1px 0 #fff"></div>
<div class="a" style="left:1253px;top:272px;width:19px;height:19px;background:#eeeeee;border:1px solid #8a96a4;box-shadow:inset 1px 1px 0 #fff"></div>
<div class="a" style="left:1253px;top:297px;width:19px;height:19px;background:#eeeeee;border:1px solid #8a96a4;box-shadow:inset 1px 1px 0 #fff"></div>
<div class="a" style="left:1253px;top:322px;width:19px;height:19px;background:#eeeeee;border:1px solid #8a96a4;box-shadow:inset 1px 1px 0 #fff"></div>
<div class="a" style="left:1253px;top:347px;width:19px;height:19px;background:#eeeeee;border:1px solid #8a96a4;box-shadow:inset 1px 1px 0 #fff"></div>
<div class="a" style="left:1253px;top:372px;width:19px;height:19px;background:#eeeeee;border:1px solid #8a96a4;box-shadow:inset 1px 1px 0 #fff"></div>
<div class="a" style="left:1253px;top:397px;width:19px;height:19px;background:#eeeeee;border:1px solid #8a96a4;box-shadow:inset 1px 1px 0 #fff"></div>
<div class="a" style="left:1253px;top:422px;width:19px;height:19px;background:#eeeeee;border:1px solid #8a96a4;box-shadow:inset 1px 1px 0 #fff"></div>
<div class="a" style="left:1253px;top:447px;width:19px;height:19px;background:#eeeeee;border:1px solid #8a96a4;box-shadow:inset 1px 1px 0 #fff"></div>
<div class="a" style="left:1253px;top:472px;width:19px;height:19px;background:#eeeeee;border:1px solid #8a96a4;box-shadow:inset 1px 1px 0 #fff"></div>
<div class="a" style="left:1253px;top:497px;width:19px;height:19px;background:#eeeeee;border:1px solid #8a96a4;box-shadow:inset 1px 1px 0 #fff"></div>
<div class="a" style="left:1253px;top:522px;width:19px;height:19px;background:#eeeeee;border:1px solid #8a96a4;box-shadow:inset 1px 1px 0 #fff"></div>
<div class="a" style="left:1253px;top:547px;width:19px;height:19px;background:#eeeeee;border:1px solid #8a96a4;box-shadow:inset 1px 1px 0 #fff"></div>
<div class="a" style="left:1253px;top:572px;width:19px;height:19px;background:#eeeeee;border:1px solid #8a96a4;box-shadow:inset 1px 1px 0 #fff"></div>
<div class="a" style="left:1253px;top:597px;width:19px;height:19px;background:#eeeeee;border:1px solid #8a96a4;box-shadow:inset 1px 1px 0 #fff"></div>
<div class="a" style="left:1253px;top:622px;width:19px;height:19px;background:#eeeeee;border:1px solid #8a96a4;box-shadow:inset 1px 1px 0 #fff"></div>
<div class="a" style="left:1253px;top:647px;width:19px;height:19px;background:#eeeeee;border:1px solid #8a96a4;box-shadow:inset 1px 1px 0 #fff"></div>
<div class="a" style="left:1253px;top:672px;width:19px;height:19px;background:#eeeeee;border:1px solid #8a96a4;box-shadow:inset 1px 1px 0 #fff"></div>
<div class="a" style="left:1253px;top:697px;width:19px;height:19px;background:#eeeeee;border:1px solid #8a96a4;box-shadow:inset 1px 1px 0 #fff"></div>
<div class="a" style="left:1253px;top:722px;width:19px;height:19px;background:#eeeeee;border:1px solid #8a96a4;box-shadow:inset 1px 1px 0 #fff"></div>
<div class="a" style="left:1253px;top:747px;width:19px;height:19px;background:#eeeeee;border:1px solid #8a96a4;box-shadow:inset 1px 1px 0 #fff"></div>
<div class="a" style="left:1253px;top:772px;width:19px;height:19px;background:#eeeeee;border:1px solid #8a96a4;box-shadow:inset 1px 1px 0 #fff"></div>
<div class="a" style="left:1253px;top:797px;width:19px;height:19px;background:#eeeeee;border:1px solid #8a96a4;box-shadow:inset 1px 1px 0 #fff"></div>
<div class="a" style="left:1253px;top:822px;width:19px;height:19px;background:#eeeeee;border:1px solid #8a96a4;box-shadow:inset 1px 1px 0 #fff"></div>
<svg class="a" style="left:1253px;top:122px" width="19" height="720"><path d="M1 18L18 1V18Z" fill="#a8a8a8"/><path d="M5 8Q6 3 11 4M9 2L12 4L9 6M14 11Q13 16 8 15M10 13L7 15L10 17" stroke="#101080" stroke-width="2" fill="none"/><g transform="translate(0,25)"><rect x="3" y="3" width="13" height="13" fill="#fff" stroke="#2020a0"/><path d="M3 9.5H16M6 3V16M13 3V16" stroke="#2020a0"/><path d="M7 7L9.5 5L12 7M7 12L9.5 14L12 12" stroke="#e01010" stroke-width="1.5" fill="none"/></g><g transform="translate(0,50)"><path d="M6 3V15L9 12L11 16L13 15L11 11H15Z" fill="#101080"/></g><g transform="translate(0,75)"><path d="M4 15L15 4M5 5H8M11 15H14M5 10Q5 6 9 6M14 9Q14 13 10 13" stroke="#f4f4f4" stroke-width="1.6" fill="none"/></g><g transform="translate(0,100)"><path d="M4 15L15 4M5 5H8M11 15H14M5 10Q5 6 9 6M14 9Q14 13 10 13" stroke="#f4f4f4" stroke-width="1.6" fill="none"/></g><g transform="translate(0,125)"><path d="M4 15L15 4M5 5H8M11 15H14M5 10Q5 6 9 6M14 9Q14 13 10 13" stroke="#f4f4f4" stroke-width="1.6" fill="none"/></g><g transform="translate(0,150)"><path d="M3 3V16H16" stroke="#000080" fill="none"/><path d="M5 10L8 6L11 13L15 7" stroke="#2040c0" stroke-width="1.3" fill="none"/></g><g transform="translate(0,175)"><path d="M3 9.5H16" stroke="#c01010" stroke-width="1.5"/><rect x="2" y="8" width="3" height="3" fill="#c01010"/><rect x="14" y="8" width="3" height="3" fill="#c01010"/></g><g transform="translate(0,200)"><path d="M9.5 3V16" stroke="#c01010" stroke-width="1.5"/><rect x="8" y="2" width="3" height="3" fill="#c01010"/><rect x="8" y="14" width="3" height="3" fill="#c01010"/></g><g transform="translate(0,225)"><path d="M4 10V16H15V3" stroke="#000080" fill="none"/><rect x="6" y="9" width="3" height="3" fill="#2040c0"/><path d="M12 12V4" stroke="#c01010" stroke-width="1.5"/></g><g transform="translate(0,250)"><path d="M4 15L15 4" stroke="#c01010" stroke-width="1.5"/><rect x="3" y="13" width="3" height="3" fill="#c01010"/><rect x="13" y="3" width="3" height="3" fill="#c01010"/></g><g transform="translate(0,275)"><path d="M3 16L16 3M4 5H9M10 13H15M12 10V16" stroke="#c01010" stroke-width="1.5" fill="none"/><path d="M3 9L6 3L9 9" stroke="#000080" fill="none"/></g><g transform="translate(0,300)"><path d="M3 4H16M5 7H16M7 10H16M3 13H16M3 16H16" stroke="#c01010"/><path d="M3 13H16M3 16H16" stroke="#2020a0"/></g><g transform="translate(0,325)"><path d="M4 9L8 3M9 9L13 3" stroke="#c01010" stroke-width="1.2"/><path d="M4 16V11M7 16V11M10 16V11M13 16V11" stroke="#101080" stroke-width="1.3"/></g><g transform="translate(0,350)"><path d="M4 9L8 3M9 9L13 3" stroke="#c01010" stroke-width="1.2"/><path d="M3 14Q6 10 9 13T16 12M4 16Q8 13 15 15" stroke="#101080" stroke-width="1.2" fill="none"/></g><g transform="translate(0,375)"><path d="M9.5 3L3 16M9.5 3L9.5 16M9.5 3L16 16M6 10Q9.5 7 13 10" stroke="#101080" stroke-width="1.2" fill="none"/><circle cx="13" cy="7" r="2.5" fill="none" stroke="#c01010"/></g><g transform="translate(0,400)"><path d="M4 8L7 3M9 3H13V6H9L13 8" stroke="#c01010" stroke-width="1.2" fill="none"/><path d="M3 11H16M3 13.5H16M3 16H16" stroke="#101080" stroke-width="1.2"/></g><g transform="translate(0,425)"><path d="M3 14L14 3M6 16L16 6M4 10H8" stroke="#101080" stroke-width="1.2" fill="none"/></g><g transform="translate(0,450)"><path d="M4 3H7M4 3V8H7M4 5.5H6" stroke="#c01010" stroke-width="1.1" fill="none"/><path d="M3 15L8 10L11 13L16 8" stroke="#101080" stroke-width="1.3" fill="none"/><rect x="2.5" y="14" width="2" height="2" fill="#c01010"/><rect x="7" y="9" width="2" height="2" fill="#c01010"/></g><g transform="translate(0,475)"><path d="M4 3H7M4 3V8H7M4 5.5H6" stroke="#c01010" stroke-width="1.1" fill="none"/><path d="M3 15L8 10L11 13L16 8" stroke="#101080" stroke-width="1.3" fill="none"/><rect x="2.5" y="14" width="2" height="2" fill="#c01010"/><rect x="7" y="9" width="2" height="2" fill="#c01010"/></g><g transform="translate(0,500)"><path d="M4 14L13 5L15 7L6 16Z" fill="#40a040"/><path d="M4 14L3 17L6 16Z" fill="#333"/><path d="M3 17.5H16" stroke="#aaa"/></g><g transform="translate(0,525)"><path d="M4 3V8H7" stroke="#c01010" stroke-width="1.1" fill="none"/><path d="M4 16L9 9M8 16L13 9M12 16L16 10M3 13H16" stroke="#c01010" stroke-width="1.2" fill="none"/><path d="M5 11V16M15 8V14" stroke="#101080" stroke-width="1.2"/></g><g transform="translate(0,550)"><path d="M4 3V8H7" stroke="#c01010" stroke-width="1.1" fill="none"/><path d="M4 16L9 9M8 16L13 9M12 16L16 10M3 13H16" stroke="#c01010" stroke-width="1.2" fill="none"/><path d="M5 11V16M15 8V14" stroke="#101080" stroke-width="1.2"/></g><g transform="translate(0,575)"><path d="M4 3V8H7" stroke="#c01010" stroke-width="1.1" fill="none"/><path d="M4 16L9 9M8 16L13 9M12 16L16 10M3 13H16" stroke="#c01010" stroke-width="1.2" fill="none"/><path d="M5 11V16M15 8V14" stroke="#101080" stroke-width="1.2"/></g><g transform="translate(0,600)"><path d="M4 3V8H7" stroke="#c01010" stroke-width="1.1" fill="none"/><path d="M4 16L9 9M8 16L13 9M12 16L16 10M3 13H16" stroke="#c01010" stroke-width="1.2" fill="none"/><path d="M5 11V16M15 8V14" stroke="#101080" stroke-width="1.2"/></g><g transform="translate(0,625)"><rect x="3.5" y="3.5" width="6" height="6" fill="none" stroke="#c01010"/><path d="M3 12H16M3 15H16M11 5H16M11 8H16" stroke="#101080"/></g><g transform="translate(0,650)"><rect x="2" y="2" width="15" height="15" fill="#eee"/><path d="M4 4H15V7M9.5 4V15M7 15H12" stroke="#1a1ab0" stroke-width="2.5" fill="none"/></g><g transform="translate(0,675)"><rect x="2" y="2" width="15" height="15" fill="#eee"/><path d="M9.5 2L16 9H12V16H7V9H3Z" fill="#1a30d0"/></g><g transform="translate(0,700)"><rect x="2" y="2" width="15" height="15" fill="#eee"/><path d="M9.5 17L16 10H12V3H7V10H3Z" fill="#1a30d0"/></g></svg>
<svg class="a" style="left:1264px;top:846px" width="9" height="9"><path d="M1 1L4.5 4L8 1M1 5L4.5 8L8 5" stroke="#111" stroke-width="1.4" fill="none"/></svg>
<div class="a" style="left:213px;top:837px;width:1035px;height:20px;background:#a6c1da"></div>
<div class="a" style="left:216px;top:843px;width:29px;height:3px;background:#d2e0ec;border-bottom:1px solid #8aa2ba"></div>
<div class="a" style="left:216px;top:848px;width:29px;height:3px;background:#d2e0ec;border-bottom:1px solid #8aa2ba"></div>
<div class="a" style="left:248px;top:838px;width:16px;height:18px;background:#b8d0e4;border-left:1px solid #e0ecf4"></div>
<svg class="a" style="left:252px;top:843px" width="6" height="9"><path d="M5 0V9L0 4.5Z" fill="#111"/></svg>
<div class="a" style="left:264px;top:838px;width:160px;height:18px;background:#c0c0c0"></div>
<div class="a" style="left:426px;top:838px;width:604px;height:18px;background:#6a6a6a"></div>
<svg class="a" style="left:426px;top:838px" width="604" height="18"><path d="M314.7 18.3 L314.7 17.3 L324.5 16.1 L328.4 14.3 L333.4 15.1 L350.1 15.1 L351.1 16.7 L356.0 15.1 L364.9 15.1 L365.9 17.1 L395.4 17.1 L396.4 15.3 L410.1 12.7 L414.1 5.9 L417.0 3.3 L421.0 7.8 L425.9 5.9 L428.8 4.5 L431.8 7.8 L439.7 7.8 L443.6 6.8 L449.5 10.4 L453.4 14.3 L456.4 11.2 L458.4 4.9 L460.3 -0.6 L462.3 3.9 L467.2 6.8 L477.1 5.9 L483.0 7.2 L488.9 5.9 L498.7 7.8 L502.7 12.7 L514.5 12.7 L518.4 11.8 L522.3 12.7 L536.1 13.7 L549.9 13.1 L555.8 14.3 L577.5 14.3 L589.3 11.2 L593.2 9.8 L593.2 18.3 Z" fill="#333"/><path d="M26 18V15.5L27.5 15H31L32 18Z" fill="#333"/></svg>
<div class="a" style="left:423px;top:838px;width:4px;height:18px;background:#fff;border-left:1px solid #000;border-right:1px solid #000"></div>
<div class="a" style="left:1029px;top:838px;width:4px;height:18px;background:#fff;border-left:1px solid #000;border-right:1px solid #000"></div>
<div class="a" style="left:1033px;top:838px;width:17px;height:18px;background:#b8d0e4;border-left:1px solid #e0ecf4;border-right:1px solid #8aa2ba"></div>
<svg class="a" style="left:1033px;top:838px" width="17" height="18"><path d="M6 4.5L11 9L6 13.5Z" fill="#111"/></svg>
<div class="a" style="left:1050px;top:838px;width:17px;height:18px;background:#b8d0e4;border-left:1px solid #e0ecf4;border-right:1px solid #8aa2ba"></div>
<svg class="a" style="left:1050px;top:838px" width="17" height="18"><path d="M9 4.5L4 9L9 13.5ZM14 4.5L9 9L14 13.5Z" fill="#111"/></svg>
<div class="a" style="left:1068px;top:838px;width:17px;height:18px;background:#b8d0e4;border-left:1px solid #e0ecf4;border-right:1px solid #8aa2ba"></div>
<svg class="a" style="left:1068px;top:838px" width="17" height="18"><path d="M3 4.5L8 9L3 13.5ZM8 4.5L13 9L8 13.5Z" fill="#111"/></svg>
<div class="a" style="left:1087px;top:837px;width:52px;height:19px;background:#fff;border-top:2px solid #c8c8c8;border-left:1px solid #c8c8c8"></div>
<svg class="a" style="left:1087px;top:837px" width="52" height="19"><text x="48" y="15" fill="#222" font-size="13" font-family="Liberation Sans" font-weight="normal" text-anchor="end" textLength="22" lengthAdjust="spacingAndGlyphs">242</text></svg>
<svg class="a" style="left:1140px;top:838px" width="108" height="18">
<path d="M3 9L8 3V15ZM10 3L15 9L10 15Z" fill="#000"/>
<path d="M21 3L27 9L21 15ZM33 3L27 9L33 15Z" fill="#000"/><path d="M27 3V15" stroke="#000" stroke-width="1.5"/>
<circle cx="45" cy="9" r="5" fill="none" stroke="#000" stroke-width="1.4"/><path d="M42 9H48M45 6V12" stroke="#000" stroke-width="1.4"/>
<circle cx="63" cy="9" r="5" fill="none" stroke="#c8d4dc" stroke-width="1.4"/><path d="M60 9H66" stroke="#c8d4dc" stroke-width="1.4"/>
<rect x="76.5" y="4.5" width="10" height="10" fill="#c0ccd6" stroke="#d8e2ea"/>
<rect x="93.5" y="3.5" width="11" height="11" fill="#fff" stroke="#000" stroke-width="1.2"/><path d="M94 4L104 14M104 4L94 14" stroke="#000"/>
</svg>
<div class="a" style="left:0;top:956px;width:1617px;height:66px;background:#223455"></div>
<div class="a" style="left:0;top:960px;width:16px;height:20px;background:#3a4d6e;border-right:1px solid #4a5d7e;border-top:1px solid #4a5d7e"></div>
<svg class="a" style="left:3px;top:965px" width="9" height="9"><path d="M1 1L8 8M8 1L1 8" stroke="#a8b4c8" stroke-width="1.4"/></svg>
<div class="a" style="left:0;top:980px;width:1617px;height:42px;background:#10203a"></div>
<svg class="a" style="left:1564px;top:962px" width="46" height="14">
<rect x="1.5" y="1.5" width="10" height="11" fill="#d8d4c8" stroke="#111"/><path d="M4 5H10M4 8H10M4 11H10" stroke="#333"/><path d="M0.5 0.5H9" stroke="#ddd"/>
<rect x="17.5" y="1.5" width="11" height="11" fill="#d8d4c8" stroke="#111"/><path d="M20 5H26M20 8H26M20 10.5H26" stroke="#333"/>
<path d="M35 2L44 11M44 2L35 11" stroke="#fff" stroke-width="2.2"/>
</svg>
<div class="a" style="left:0;top:983px;width:178px;height:16px;background:#f5f2ea"></div>
<div class="a" style="left:140px;top:984px;width:25px;height:14px;border:1px solid #c8c8c8;background:#fafafa"></div>
<div class="t" style="left:142px;top:985px;font-size:12px;color:#b8b8b8"><b class="k">주</b><b class="k">문</b></div>
<div class="a" style="left:167px;top:984px;width:11px;height:14px;border:1px solid #b8b8b8;background:#f0f0f0"></div>
<svg class="a" style="left:169px;top:989px" width="8" height="5"><path d="M0 0H8L4 4Z" fill="#888"/></svg>
<div class="a" style="left:0;top:1002px;width:12px;height:17px;background:linear-gradient(#30d030,#10b010 50%,#08a008)"></div>
<div class="a" style="left:12px;top:1002px;width:166px;height:17px;background:linear-gradient(#2a2aff,#0c0cf0 50%,#0000c8)"></div>
<div class="a" style="left:180px;top:983px;width:65px;height:16px;background:#0e2a5c"></div>
<div class="t" style="left:184px;top:985px;font-size:13px;color:#fff">KP <b class="k">종</b><b class="k">합</b></div>
<div class="a" style="left:180px;top:1002px;width:65px;height:17px;background:#0e2a5c"></div>
<div class="t" style="left:184px;top:1004px;font-size:13px;color:#fff">[<b class="k">풋</b>:<b class="k">금</b><b class="k">액</b>]</div>
<div class="a" style="left:245px;top:983px;width:383px;height:16px;background:#f5f2ea"></div>
<div class="a" style="left:245px;top:1002px;width:383px;height:17px;background:#f5f2ea"></div>
<div class="a" style="left:630px;top:983px;width:66px;height:16px;background:#0e2a5c"></div>
<div class="t" style="left:634px;top:985px;font-size:13px;color:#fff">KQ <b class="k">종</b><b class="k">합</b></div>
<div class="a" style="left:630px;top:1002px;width:66px;height:17px;background:#0e2a5c"></div>
<div class="t" style="left:634px;top:1004px;font-size:13px;color:#fff"><b class="k">프</b><b class="k">로</b><b class="k">그</b><b class="k">램</b></div>
<div class="a" style="left:696px;top:983px;width:385px;height:16px;background:#f5f2ea"></div>
<div class="a" style="left:696px;top:1002px;width:385px;height:17px;background:#f5f2ea"></div>
<div class="a" style="left:1082px;top:983px;width:65px;height:16px;background:#0e2a5c"></div>
<div class="t" style="left:1086px;top:985px;font-size:13px;color:#fff"><b class="k">삼</b><b class="k">성</b><b class="k">전</b><b class="k">자</b><b class="k">우</b></div>
<div class="a" style="left:1082px;top:1002px;width:65px;height:17px;background:#0e2a5c"></div>
<div class="t" style="left:1086px;top:1004px;font-size:13px;color:#fff"><b class="k">헤</b><b class="k">럴</b><b class="k">드</b><b class="k">경</b><b class="k">제</b></div>
<div class="a" style="left:1147px;top:983px;width:386px;height:16px;background:#f5f2ea"></div>
<div class="a" style="left:1147px;top:1002px;width:386px;height:17px;background:#f5f2ea"></div>
<svg class="a" style="left:0;top:980px" width="1625" height="42"><text x="247" y="15" fill="#c02020" font-size="13" font-family="Liberation Sans" font-weight="normal" text-anchor="start" textLength="44" lengthAdjust="spacingAndGlyphs">2,680,26</text><text x="321" y="15" fill="#c02020" font-size="13" font-family="Liberation Sans" font-weight="normal" text-anchor="start" textLength="29" lengthAdjust="spacingAndGlyphs">31,50</text><text x="365" y="15" fill="#c02020" font-size="13" font-family="Liberation Sans" font-weight="normal" text-anchor="start" textLength="35" lengthAdjust="spacingAndGlyphs">1,19 %</text><text x="416" y="15" fill="#111" font-size="13" font-family="Liberation Sans" font-weight="normal" text-anchor="start" textLength="45" lengthAdjust="spacingAndGlyphs">42,270만</text><path d="M306 13H317L311.5 4Z" fill="#d01010"/><text x="247" y="34" fill="#111" font-size="13" font-family="Liberation Sans" font-weight="normal" text-anchor="start">외</text><text x="266" y="34" fill="#2050c0" font-size="13" font-family="Liberation Sans" font-weight="normal" text-anchor="start" textLength="16" lengthAdjust="spacingAndGlyphs">-11</text><text x="300" y="34" fill="#111" font-size="13" font-family="Liberation Sans" font-weight="normal" text-anchor="start">개</text><text x="318" y="34" fill="#2050c0" font-size="13" font-family="Liberation Sans" font-weight="normal" text-anchor="start" textLength="17" lengthAdjust="spacingAndGlyphs">-13</text><text x="352" y="34" fill="#111" font-size="13" font-family="Liberation Sans" font-weight="normal" text-anchor="start">기</text><text x="370" y="34" fill="#c02020" font-size="13" font-family="Liberation Sans" font-weight="normal" text-anchor="start" textLength="11" lengthAdjust="spacingAndGlyphs">24</text><text x="697" y="15" fill="#c02020" font-size="13" font-family="Liberation Sans" font-weight="normal" text-anchor="start" textLength="35" lengthAdjust="spacingAndGlyphs">858,47</text><text x="762" y="15" fill="#c02020" font-size="13" font-family="Liberation Sans" font-weight="normal" text-anchor="start" textLength="22" lengthAdjust="spacingAndGlyphs">0,87</text><text x="799" y="15" fill="#c02020" font-size="13" font-family="Liberation Sans" font-weight="normal" text-anchor="start" textLength="35" lengthAdjust="spacingAndGlyphs">0,10 %</text><text x="850" y="15" fill="#111" font-size="13" font-family="Liberation Sans" font-weight="normal" text-anchor="start" textLength="52" lengthAdjust="spacingAndGlyphs">127,210만</text><path d="M748 13H757L752.5 5Z" fill="#d01010"/><text x="698" y="34" fill="#111" font-size="13" font-family="Liberation Sans" font-weight="normal" text-anchor="start">전</text><text x="716" y="34" fill="#c02020" font-size="13" font-family="Liberation Sans" font-weight="normal" text-anchor="start" textLength="40" lengthAdjust="spacingAndGlyphs">524,715</text><text x="772" y="34" fill="#111" font-size="13" font-family="Liberation Sans" font-weight="normal" text-anchor="start">차</text><text x="789" y="34" fill="#c02020" font-size="13" font-family="Liberation Sans" font-weight="normal" text-anchor="start" textLength="39" lengthAdjust="spacingAndGlyphs">109,648</text><text x="842" y="34" fill="#111" font-size="13" font-family="Liberation Sans" font-weight="normal" text-anchor="start">비</text><text x="860" y="34" fill="#c02020" font-size="13" font-family="Liberation Sans" font-weight="normal" text-anchor="start" textLength="40" lengthAdjust="spacingAndGlyphs">415,067</text><text x="1149" y="15" fill="#111" font-size="13" font-family="Liberation Sans" font-weight="normal" text-anchor="start" textLength="34" lengthAdjust="spacingAndGlyphs">62,500</text><text x="1213" y="15" fill="#111" font-size="13" font-family="Liberation Sans" font-weight="normal" text-anchor="start">0</text><text x="1234" y="15" fill="#111" font-size="13" font-family="Liberation Sans" font-weight="normal" text-anchor="start" textLength="36" lengthAdjust="spacingAndGlyphs">0,00 %</text><text x="1285" y="15" fill="#111" font-size="13" font-family="Liberation Sans" font-weight="normal" text-anchor="start" textLength="40" lengthAdjust="spacingAndGlyphs">880,696</text><text x="1149" y="34" fill="#111" font-size="13" font-family="Liberation Sans" font-weight="normal" text-anchor="start" textLength="250" lengthAdjust="spacingAndGlyphs">경기도 긴급복지 핫라인, 상담접수 1만 명 돌파</text></svg>
<div class="a" style="left:1521px;top:984px;width:11px;height:14px;border:1px solid #b8b8b8;background:#f0f0f0"></div>
<svg class="a" style="left:1523px;top:989px" width="8" height="5"><path d="M0 0H8L4 4Z" fill="#888"/></svg>
<div class="a" style="left:1494px;top:1003px;width:25px;height:15px;border:1px solid #c8c8c8;background:#fafafa"></div>
<div class="t" style="left:1496px;top:1004px;font-size:12px;color:#b8b8b8"><b class="k">주</b><b class="k">문</b></div>
<div class="a" style="left:1521px;top:1003px;width:11px;height:15px;border:1px solid #b8b8b8;background:#f0f0f0"></div>
<svg class="a" style="left:1523px;top:1008px" width="8" height="5"><path d="M0 0H8L4 4Z" fill="#888"/></svg>
<div class="a" style="left:1537px;top:982px;width:24px;height:38px;background:linear-gradient(#203a64 0,#203a64 55%,#2e4872 55%,#2e4872 100%);border:1px solid #3a5480"></div>
<div class="t" style="left:1538px;top:1004px;font-size:12px;color:#fff"><b class="k">설</b><b class="k">정</b></div>
<div class="a" style="left:1563px;top:982px;width:24px;height:38px;background:linear-gradient(#203a64 0,#203a64 55%,#2e4872 55%,#2e4872 100%);border:1px solid #3a5480"></div>
<div class="t" style="left:1564px;top:1004px;font-size:12px;color:#fff"><b class="k">체</b><b class="k">결</b></div>
<div class="a" style="left:1589px;top:982px;width:24px;height:38px;background:linear-gradient(#203a64 0,#203a64 55%,#2e4872 55%,#2e4872 100%);border:1px solid #3a5480"></div>
<div class="t" style="left:1590px;top:1004px;font-size:12px;color:#fff"><b class="k">자</b><b class="k">동</b></div>
<svg class="a" style="left:1537px;top:982px" width="76" height="20">
<g fill="#dce6f4"><circle cx="12" cy="11" r="5"/><rect x="10.6" y="3.5" width="2.8" height="3.5" transform="rotate(0 12 11)"/><rect x="10.6" y="3.5" width="2.8" height="3.5" transform="rotate(45 12 11)"/><rect x="10.6" y="3.5" width="2.8" height="3.5" transform="rotate(90 12 11)"/><rect x="10.6" y="3.5" width="2.8" height="3.5" transform="rotate(135 12 11)"/><rect x="10.6" y="3.5" width="2.8" height="3.5" transform="rotate(180 12 11)"/><rect x="10.6" y="3.5" width="2.8" height="3.5" transform="rotate(225 12 11)"/><rect x="10.6" y="3.5" width="2.8" height="3.5" transform="rotate(270 12 11)"/><rect x="10.6" y="3.5" width="2.8" height="3.5" transform="rotate(315 12 11)"/></g><circle cx="12" cy="11" r="2.3" fill="#203a64"/>
<rect x="33.5" y="4.5" width="9" height="12" fill="none" stroke="#dce6f4" stroke-width="1.3"/><path d="M35.5 8H40.5M35.5 10.5H40.5M35.5 13H40.5" stroke="#dce6f4"/>
<path d="M57 16V8H68M70 6V14H59" stroke="#dce6f4" stroke-width="2" fill="none"/><path d="M54 9L57 5L60 9M67 12L70 16L73 12" fill="#dce6f4"/>
</svg>
<div class="a" style="left:0;top:1022px;width:1625px;height:1px;background:#e8f0f6"></div>
<div class="a" style="left:0;top:1023px;width:1625px;height:41px;background:#213440;border-top:1px solid #1a2a44"></div>
<svg class="a" style="left:0;top:1025px" width="43" height="39">
<rect width="43" height="39" fill="#4aaed0"/>
<rect x="0" y="0" width="10" height="15" fill="#6cc070"/><rect x="0" y="0" width="6" height="5" fill="#d8ecd8"/>
<rect x="9" y="1" width="34" height="3" fill="#d8b080"/>
<rect x="9" y="4" width="6" height="13" fill="#f0d890"/><rect x="15" y="4" width="7" height="14" fill="#f0a0a0"/><rect x="22" y="4" width="6" height="15" fill="#f0c870"/><rect x="28" y="4" width="6" height="15" fill="#d8d8f0"/><rect x="34" y="4" width="5" height="16" fill="#f08060"/><rect x="39" y="4" width="4" height="17" fill="#f0a090"/>
<g fill="#806050"><rect x="10" y="6" width="1" height="2"/><rect x="13" y="6" width="1" height="2"/><rect x="23" y="7" width="1" height="2"/><rect x="26" y="7" width="1" height="2"/><rect x="30" y="8" width="1" height="2"/><rect x="32" y="8" width="1" height="2"/></g>
<path d="M0 15L9 17L43 22V24L0 20Z" fill="#b8b0a0"/>
<path d="M0 23Q12 24 25 26L26 30Q14 33 0 31Z" fill="#e8e0dc"/><path d="M0 24L22 26L25 28L8 29L0 28Z" fill="#c89080"/><path d="M20 26L26 27L26 31L22 30Z" fill="#c03030"/>
<path d="M0 31Q6 33 12 34L13 37L0 37Z" fill="#f0f4f4"/><path d="M0 37H13V39H0Z" fill="#2060b0"/>
<path d="M14 34Q28 36 43 37" stroke="#a8dce8" fill="none"/>
</svg>
<svg class="a" style="left:58px;top:1036px" width="18" height="17"><g stroke="#e8e8e8" stroke-width="1.6" fill="none"><rect x="1" y="4" width="9" height="9"/><path d="M13 2V15M13 7H17M0.5 1H10M0.5 16H10"/></g></svg>
<svg class="a" style="left:107px;top:1033px" width="22" height="20"><path d="M1 3H8L10 5H21V19H1Z" fill="#f0c040"/><rect x="1" y="7" width="20" height="12" fill="#f8d860"/><rect x="6" y="12" width="10" height="7" fill="#3a8ad8"/><rect x="9" y="14" width="4" height="5" fill="#f8d860"/></svg>
<svg class="a" style="left:155px;top:1032px" width="25" height="25"><circle cx="12.5" cy="12.5" r="12" fill="#db4437"/><path d="M12.5 12.5L2.1 6.5A12 12 0 0 0 12.5 24.5Z" fill="#0f9d58"/><path d="M12.5 12.5L12.5 24.5A12 12 0 0 0 22.9 6.5Z" fill="#f4b400"/><circle cx="12.5" cy="12.5" r="5.5" fill="#fff"/><circle cx="12.5" cy="12.5" r="4.3" fill="#4285f4"/></svg>
<svg class="a" style="left:204px;top:1032px" width="25" height="25"><circle cx="12.5" cy="12.5" r="12" fill="#1e7ad0"/><path d="M1 14Q3 3 13 2Q23 2 24 11Q24 15 19 15H9Q9 19 14 20Q8 23 4 19Q1 17 1 14Z" fill="#3cc8a0"/><path d="M9 15Q9 10 14 10Q19 10 19 15Z" fill="#1e5aa0"/></svg>
<svg class="a" style="left:253px;top:1033px" width="24" height="24"><path d="M3 21L10 2L22 6L15 23Z" fill="#cfe6f0"/><path d="M3 21L10 2L14 3.5L7 22Z" fill="#6aa8c0"/><path d="M15 23L22 6L23 9L17 23Z" fill="#d8b070"/></svg>
<svg class="a" style="left:302px;top:1033px" width="24" height="24"><rect width="24" height="24" fill="#f4f0ec"/><path d="M4 5L9 4L8 10L4 12ZM12 3L20 5L17 13L21 20L14 17L11 21L13 12Z" fill="#d02828"/></svg>
<div class="a" style="left:339px;top:1024px;width:44px;height:40px;background:#3c4851"></div>
<div class="a" style="left:383px;top:1024px;width:2px;height:40px;background:#2a3640"></div>
<svg class="a" style="left:350px;top:1032px" width="26" height="26"><defs><radialGradient id="yt" cx="0.4" cy="0.3" r="0.7"><stop offset="0" stop-color="#4a6aff"/><stop offset="1" stop-color="#0010c8"/></radialGradient></defs><circle cx="13" cy="13" r="12.5" fill="url(#yt)" stroke="#c8d0f0" stroke-width="0.8"/><path d="M5 6H9L11 10L13 6H17L12 13V19H9V13Z" fill="#fff"/><path d="M13 13H21V15H18V22H16V15H13Z" fill="#fff"/></svg>
<svg class="a" style="left:399px;top:1032px" width="26" height="26"><defs><radialGradient id="yl" cx="0.4" cy="0.3" r="0.7"><stop offset="0" stop-color="#9cf040"/><stop offset="1" stop-color="#20a010"/></radialGradient></defs><circle cx="13" cy="13" r="12" fill="url(#yl)"/><path d="M5 8H8.5L10 11L12 8H15L11 14V18H8V14ZM15 8H18L16 16H21L20.5 18H12Z" fill="#0a4010"/></svg>
<div class="a" style="left:98px;top:1062px;width:40px;height:2px;background:#8ab4d8"></div>
<div class="a" style="left:196px;top:1062px;width:40px;height:2px;background:#8ab4d8"></div>
<div class="a" style="left:293px;top:1062px;width:40px;height:2px;background:#8ab4d8"></div>
<div class="a" style="left:339px;top:1062px;width:44px;height:2px;background:#8ab4d8"></div>
<div class="a" style="left:391px;top:1062px;width:40px;height:2px;background:#8ab4d8"></div>
<svg class="a" style="left:1350px;top:1030px" width="275" height="34">
<path d="M9 18L14 13L19 18" stroke="#fff" stroke-width="1.6" fill="none"/>
<rect x="33" y="10" width="9" height="12" rx="3" fill="none" stroke="#fff" stroke-width="1.4"/><path d="M31 16Q31 24 37.5 24Q44 24 44 16M37.5 24V27" stroke="#fff" stroke-width="1.2" fill="none"/>
<path d="M54 20Q54 14 60 14Q62 10 66 12Q70 12 70 17Q70 21 66 21H57Z" fill="#d8dde2"/><circle cx="66" cy="21" r="4.5" fill="#d02020"/><path d="M64 19L68 23M68 19L64 23" stroke="#fff" stroke-width="1.2"/>
<rect x="78" y="10" width="14" height="11" fill="none" stroke="#fff" stroke-width="1.4"/><path d="M85 21V25M80 25H90" stroke="#fff" stroke-width="1.4"/><rect x="88" y="15" width="6" height="8" fill="#1e2b36" stroke="#fff"/>
<path d="M102 13H106L111 9V25L106 21H102Z" fill="none" stroke="#fff" stroke-width="1.4"/><path d="M114 13Q116 17 114 21M117 11Q120 17 117 23" stroke="#fff" stroke-width="1.2" fill="none"/>
</svg>
<div class="t" style="left:1477px;top:1035px;font-size:19px;color:#fff">A</div>
<div class="t" style="left:1508px;top:1029px;font-size:13px;color:#fff"><b class="k">오</b><b class="k">후</b> 9:14</div>
<div class="t" style="left:1500px;top:1046px;font-size:13px;color:#fff">2024-02-19</div>
<svg class="a" style="left:1584px;top:1035px" width="30" height="26"><path d="M3 3H23V17H12L8 21V17H3Z" fill="none" stroke="#fff" stroke-width="1.6"/><path d="M7 8H19M7 12H17" stroke="#fff" stroke-width="1.4"/><circle cx="21" cy="18" r="7.5" fill="#1e2b36" stroke="#ddd" stroke-width="1.2"/></svg>
<div class="t" style="left:1598px;top:1048px;font-size:11px;color:#fff">13</div>
</body></html>
